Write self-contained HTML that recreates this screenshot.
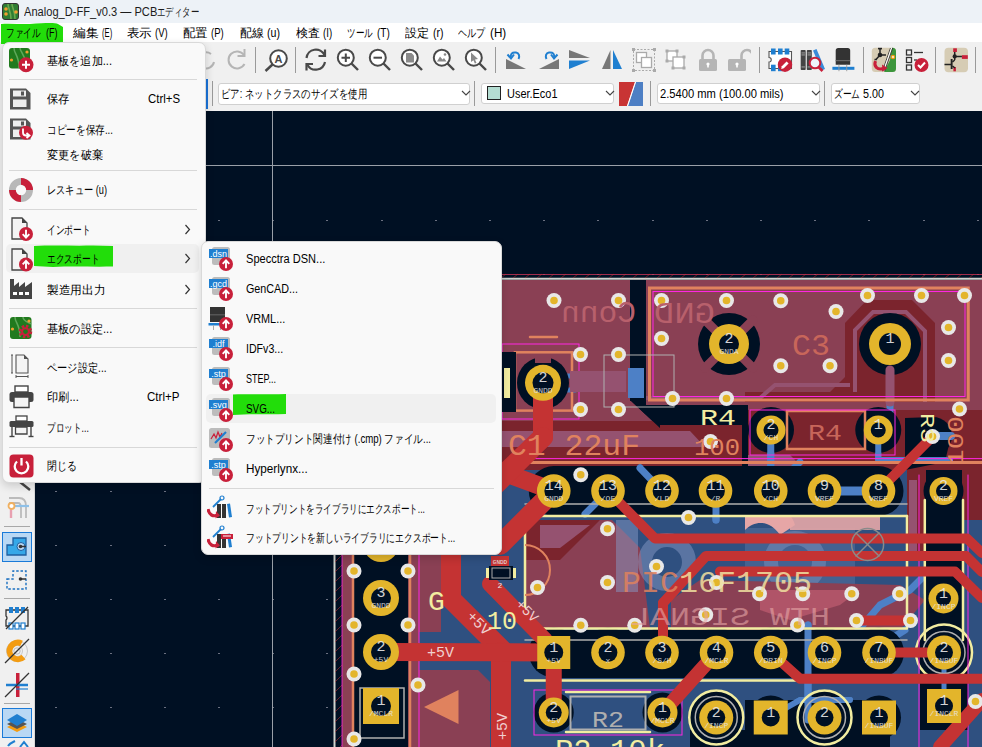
<!DOCTYPE html>
<html><head><meta charset="utf-8">
<style>
*{box-sizing:border-box;margin:0;padding:0}
html,body{width:982px;height:747px;overflow:hidden;background:#001023;font-family:"Liberation Sans",sans-serif;font-size:12px;color:#1a1a1a;position:relative}
.abs{position:absolute}
#title{left:0;top:0;width:982px;height:23px;background:#edf2f7}
#menubar{left:0;top:23px;width:982px;height:19px;background:#fff}
#tb1{left:0;top:42px;width:982px;height:36px;background:#f0f0f0}
#tb2{left:0;top:78px;width:982px;height:33px;background:#f0f0f0}
#lefttb{left:0;top:111px;width:35px;height:636px;background:#f0f0f0;border-right:1px solid #d8d8d8}
.t{position:absolute;white-space:nowrap;line-height:1}
.menu{position:absolute;background:#f9f9f9;border:1px solid #d9d9d9;border-radius:7px;box-shadow:0 3px 8px rgba(0,0,0,0.16)}
.sep{position:absolute;height:1px;background:#d8d8d8}
.dd{position:absolute;background:#fff;border:1px solid #d0d0d0;border-radius:3px}
.vsep{position:absolute;width:1px;background:#9a9a9a}
</style></head><body>
<svg class="abs" style="left:0;top:0" width="982" height="747" font-family="Liberation Sans, sans-serif"><rect x="55" y="165" width="2" height="1" fill="#6a7080" /><rect x="55" y="220" width="2" height="1" fill="#6a7080" /><rect x="55" y="274" width="2" height="1" fill="#6a7080" /><rect x="55" y="328" width="2" height="1" fill="#6a7080" /><rect x="55" y="382" width="2" height="1" fill="#6a7080" /><rect x="55" y="436" width="2" height="1" fill="#6a7080" /><rect x="55" y="491" width="2" height="1" fill="#6a7080" /><rect x="55" y="545" width="2" height="1" fill="#6a7080" /><rect x="55" y="599" width="2" height="1" fill="#6a7080" /><rect x="55" y="653" width="2" height="1" fill="#6a7080" /><rect x="55" y="707" width="2" height="1" fill="#6a7080" /><rect x="55" y="762" width="2" height="1" fill="#6a7080" /><rect x="110" y="165" width="2" height="1" fill="#6a7080" /><rect x="110" y="220" width="2" height="1" fill="#6a7080" /><rect x="110" y="274" width="2" height="1" fill="#6a7080" /><rect x="110" y="328" width="2" height="1" fill="#6a7080" /><rect x="110" y="382" width="2" height="1" fill="#6a7080" /><rect x="110" y="436" width="2" height="1" fill="#6a7080" /><rect x="110" y="491" width="2" height="1" fill="#6a7080" /><rect x="110" y="545" width="2" height="1" fill="#6a7080" /><rect x="110" y="599" width="2" height="1" fill="#6a7080" /><rect x="110" y="653" width="2" height="1" fill="#6a7080" /><rect x="110" y="707" width="2" height="1" fill="#6a7080" /><rect x="110" y="762" width="2" height="1" fill="#6a7080" /><rect x="164" y="165" width="2" height="1" fill="#6a7080" /><rect x="164" y="220" width="2" height="1" fill="#6a7080" /><rect x="164" y="274" width="2" height="1" fill="#6a7080" /><rect x="164" y="328" width="2" height="1" fill="#6a7080" /><rect x="164" y="382" width="2" height="1" fill="#6a7080" /><rect x="164" y="436" width="2" height="1" fill="#6a7080" /><rect x="164" y="491" width="2" height="1" fill="#6a7080" /><rect x="164" y="545" width="2" height="1" fill="#6a7080" /><rect x="164" y="599" width="2" height="1" fill="#6a7080" /><rect x="164" y="653" width="2" height="1" fill="#6a7080" /><rect x="164" y="707" width="2" height="1" fill="#6a7080" /><rect x="164" y="762" width="2" height="1" fill="#6a7080" /><rect x="218" y="165" width="2" height="1" fill="#6a7080" /><rect x="218" y="220" width="2" height="1" fill="#6a7080" /><rect x="218" y="274" width="2" height="1" fill="#6a7080" /><rect x="218" y="328" width="2" height="1" fill="#6a7080" /><rect x="218" y="382" width="2" height="1" fill="#6a7080" /><rect x="218" y="436" width="2" height="1" fill="#6a7080" /><rect x="218" y="491" width="2" height="1" fill="#6a7080" /><rect x="218" y="545" width="2" height="1" fill="#6a7080" /><rect x="218" y="599" width="2" height="1" fill="#6a7080" /><rect x="218" y="653" width="2" height="1" fill="#6a7080" /><rect x="218" y="707" width="2" height="1" fill="#6a7080" /><rect x="218" y="762" width="2" height="1" fill="#6a7080" /><rect x="272" y="165" width="2" height="1" fill="#6a7080" /><rect x="272" y="220" width="2" height="1" fill="#6a7080" /><rect x="272" y="274" width="2" height="1" fill="#6a7080" /><rect x="272" y="328" width="2" height="1" fill="#6a7080" /><rect x="272" y="382" width="2" height="1" fill="#6a7080" /><rect x="272" y="436" width="2" height="1" fill="#6a7080" /><rect x="272" y="491" width="2" height="1" fill="#6a7080" /><rect x="272" y="545" width="2" height="1" fill="#6a7080" /><rect x="272" y="599" width="2" height="1" fill="#6a7080" /><rect x="272" y="653" width="2" height="1" fill="#6a7080" /><rect x="272" y="707" width="2" height="1" fill="#6a7080" /><rect x="272" y="762" width="2" height="1" fill="#6a7080" /><rect x="326" y="165" width="2" height="1" fill="#6a7080" /><rect x="326" y="220" width="2" height="1" fill="#6a7080" /><rect x="326" y="274" width="2" height="1" fill="#6a7080" /><rect x="326" y="328" width="2" height="1" fill="#6a7080" /><rect x="326" y="382" width="2" height="1" fill="#6a7080" /><rect x="326" y="436" width="2" height="1" fill="#6a7080" /><rect x="326" y="491" width="2" height="1" fill="#6a7080" /><rect x="326" y="545" width="2" height="1" fill="#6a7080" /><rect x="326" y="599" width="2" height="1" fill="#6a7080" /><rect x="326" y="653" width="2" height="1" fill="#6a7080" /><rect x="326" y="707" width="2" height="1" fill="#6a7080" /><rect x="326" y="762" width="2" height="1" fill="#6a7080" /><rect x="381" y="165" width="2" height="1" fill="#6a7080" /><rect x="381" y="220" width="2" height="1" fill="#6a7080" /><rect x="381" y="274" width="2" height="1" fill="#6a7080" /><rect x="381" y="328" width="2" height="1" fill="#6a7080" /><rect x="381" y="382" width="2" height="1" fill="#6a7080" /><rect x="381" y="436" width="2" height="1" fill="#6a7080" /><rect x="381" y="491" width="2" height="1" fill="#6a7080" /><rect x="381" y="545" width="2" height="1" fill="#6a7080" /><rect x="381" y="599" width="2" height="1" fill="#6a7080" /><rect x="381" y="653" width="2" height="1" fill="#6a7080" /><rect x="381" y="707" width="2" height="1" fill="#6a7080" /><rect x="381" y="762" width="2" height="1" fill="#6a7080" /><rect x="435" y="165" width="2" height="1" fill="#6a7080" /><rect x="435" y="220" width="2" height="1" fill="#6a7080" /><rect x="435" y="274" width="2" height="1" fill="#6a7080" /><rect x="435" y="328" width="2" height="1" fill="#6a7080" /><rect x="435" y="382" width="2" height="1" fill="#6a7080" /><rect x="435" y="436" width="2" height="1" fill="#6a7080" /><rect x="435" y="491" width="2" height="1" fill="#6a7080" /><rect x="435" y="545" width="2" height="1" fill="#6a7080" /><rect x="435" y="599" width="2" height="1" fill="#6a7080" /><rect x="435" y="653" width="2" height="1" fill="#6a7080" /><rect x="435" y="707" width="2" height="1" fill="#6a7080" /><rect x="435" y="762" width="2" height="1" fill="#6a7080" /><rect x="489" y="165" width="2" height="1" fill="#6a7080" /><rect x="489" y="220" width="2" height="1" fill="#6a7080" /><rect x="489" y="274" width="2" height="1" fill="#6a7080" /><rect x="489" y="328" width="2" height="1" fill="#6a7080" /><rect x="489" y="382" width="2" height="1" fill="#6a7080" /><rect x="489" y="436" width="2" height="1" fill="#6a7080" /><rect x="489" y="491" width="2" height="1" fill="#6a7080" /><rect x="489" y="545" width="2" height="1" fill="#6a7080" /><rect x="489" y="599" width="2" height="1" fill="#6a7080" /><rect x="489" y="653" width="2" height="1" fill="#6a7080" /><rect x="489" y="707" width="2" height="1" fill="#6a7080" /><rect x="489" y="762" width="2" height="1" fill="#6a7080" /><rect x="543" y="165" width="2" height="1" fill="#6a7080" /><rect x="543" y="220" width="2" height="1" fill="#6a7080" /><rect x="543" y="274" width="2" height="1" fill="#6a7080" /><rect x="543" y="328" width="2" height="1" fill="#6a7080" /><rect x="543" y="382" width="2" height="1" fill="#6a7080" /><rect x="543" y="436" width="2" height="1" fill="#6a7080" /><rect x="543" y="491" width="2" height="1" fill="#6a7080" /><rect x="543" y="545" width="2" height="1" fill="#6a7080" /><rect x="543" y="599" width="2" height="1" fill="#6a7080" /><rect x="543" y="653" width="2" height="1" fill="#6a7080" /><rect x="543" y="707" width="2" height="1" fill="#6a7080" /><rect x="543" y="762" width="2" height="1" fill="#6a7080" /><rect x="597" y="165" width="2" height="1" fill="#6a7080" /><rect x="597" y="220" width="2" height="1" fill="#6a7080" /><rect x="597" y="274" width="2" height="1" fill="#6a7080" /><rect x="597" y="328" width="2" height="1" fill="#6a7080" /><rect x="597" y="382" width="2" height="1" fill="#6a7080" /><rect x="597" y="436" width="2" height="1" fill="#6a7080" /><rect x="597" y="491" width="2" height="1" fill="#6a7080" /><rect x="597" y="545" width="2" height="1" fill="#6a7080" /><rect x="597" y="599" width="2" height="1" fill="#6a7080" /><rect x="597" y="653" width="2" height="1" fill="#6a7080" /><rect x="597" y="707" width="2" height="1" fill="#6a7080" /><rect x="597" y="762" width="2" height="1" fill="#6a7080" /><rect x="652" y="165" width="2" height="1" fill="#6a7080" /><rect x="652" y="220" width="2" height="1" fill="#6a7080" /><rect x="652" y="274" width="2" height="1" fill="#6a7080" /><rect x="652" y="328" width="2" height="1" fill="#6a7080" /><rect x="652" y="382" width="2" height="1" fill="#6a7080" /><rect x="652" y="436" width="2" height="1" fill="#6a7080" /><rect x="652" y="491" width="2" height="1" fill="#6a7080" /><rect x="652" y="545" width="2" height="1" fill="#6a7080" /><rect x="652" y="599" width="2" height="1" fill="#6a7080" /><rect x="652" y="653" width="2" height="1" fill="#6a7080" /><rect x="652" y="707" width="2" height="1" fill="#6a7080" /><rect x="652" y="762" width="2" height="1" fill="#6a7080" /><rect x="706" y="165" width="2" height="1" fill="#6a7080" /><rect x="706" y="220" width="2" height="1" fill="#6a7080" /><rect x="706" y="274" width="2" height="1" fill="#6a7080" /><rect x="706" y="328" width="2" height="1" fill="#6a7080" /><rect x="706" y="382" width="2" height="1" fill="#6a7080" /><rect x="706" y="436" width="2" height="1" fill="#6a7080" /><rect x="706" y="491" width="2" height="1" fill="#6a7080" /><rect x="706" y="545" width="2" height="1" fill="#6a7080" /><rect x="706" y="599" width="2" height="1" fill="#6a7080" /><rect x="706" y="653" width="2" height="1" fill="#6a7080" /><rect x="706" y="707" width="2" height="1" fill="#6a7080" /><rect x="706" y="762" width="2" height="1" fill="#6a7080" /><rect x="760" y="165" width="2" height="1" fill="#6a7080" /><rect x="760" y="220" width="2" height="1" fill="#6a7080" /><rect x="760" y="274" width="2" height="1" fill="#6a7080" /><rect x="760" y="328" width="2" height="1" fill="#6a7080" /><rect x="760" y="382" width="2" height="1" fill="#6a7080" /><rect x="760" y="436" width="2" height="1" fill="#6a7080" /><rect x="760" y="491" width="2" height="1" fill="#6a7080" /><rect x="760" y="545" width="2" height="1" fill="#6a7080" /><rect x="760" y="599" width="2" height="1" fill="#6a7080" /><rect x="760" y="653" width="2" height="1" fill="#6a7080" /><rect x="760" y="707" width="2" height="1" fill="#6a7080" /><rect x="760" y="762" width="2" height="1" fill="#6a7080" /><rect x="814" y="165" width="2" height="1" fill="#6a7080" /><rect x="814" y="220" width="2" height="1" fill="#6a7080" /><rect x="814" y="274" width="2" height="1" fill="#6a7080" /><rect x="814" y="328" width="2" height="1" fill="#6a7080" /><rect x="814" y="382" width="2" height="1" fill="#6a7080" /><rect x="814" y="436" width="2" height="1" fill="#6a7080" /><rect x="814" y="491" width="2" height="1" fill="#6a7080" /><rect x="814" y="545" width="2" height="1" fill="#6a7080" /><rect x="814" y="599" width="2" height="1" fill="#6a7080" /><rect x="814" y="653" width="2" height="1" fill="#6a7080" /><rect x="814" y="707" width="2" height="1" fill="#6a7080" /><rect x="814" y="762" width="2" height="1" fill="#6a7080" /><rect x="868" y="165" width="2" height="1" fill="#6a7080" /><rect x="868" y="220" width="2" height="1" fill="#6a7080" /><rect x="868" y="274" width="2" height="1" fill="#6a7080" /><rect x="868" y="328" width="2" height="1" fill="#6a7080" /><rect x="868" y="382" width="2" height="1" fill="#6a7080" /><rect x="868" y="436" width="2" height="1" fill="#6a7080" /><rect x="868" y="491" width="2" height="1" fill="#6a7080" /><rect x="868" y="545" width="2" height="1" fill="#6a7080" /><rect x="868" y="599" width="2" height="1" fill="#6a7080" /><rect x="868" y="653" width="2" height="1" fill="#6a7080" /><rect x="868" y="707" width="2" height="1" fill="#6a7080" /><rect x="868" y="762" width="2" height="1" fill="#6a7080" /><rect x="923" y="165" width="2" height="1" fill="#6a7080" /><rect x="923" y="220" width="2" height="1" fill="#6a7080" /><rect x="923" y="274" width="2" height="1" fill="#6a7080" /><rect x="923" y="328" width="2" height="1" fill="#6a7080" /><rect x="923" y="382" width="2" height="1" fill="#6a7080" /><rect x="923" y="436" width="2" height="1" fill="#6a7080" /><rect x="923" y="491" width="2" height="1" fill="#6a7080" /><rect x="923" y="545" width="2" height="1" fill="#6a7080" /><rect x="923" y="599" width="2" height="1" fill="#6a7080" /><rect x="923" y="653" width="2" height="1" fill="#6a7080" /><rect x="923" y="707" width="2" height="1" fill="#6a7080" /><rect x="923" y="762" width="2" height="1" fill="#6a7080" /><rect x="977" y="165" width="2" height="1" fill="#6a7080" /><rect x="977" y="220" width="2" height="1" fill="#6a7080" /><rect x="977" y="274" width="2" height="1" fill="#6a7080" /><rect x="977" y="328" width="2" height="1" fill="#6a7080" /><rect x="977" y="382" width="2" height="1" fill="#6a7080" /><rect x="977" y="436" width="2" height="1" fill="#6a7080" /><rect x="977" y="491" width="2" height="1" fill="#6a7080" /><rect x="977" y="545" width="2" height="1" fill="#6a7080" /><rect x="977" y="599" width="2" height="1" fill="#6a7080" /><rect x="977" y="653" width="2" height="1" fill="#6a7080" /><rect x="977" y="707" width="2" height="1" fill="#6a7080" /><rect x="977" y="762" width="2" height="1" fill="#6a7080" /><line x1="272.5" y1="111" x2="272.5" y2="747" stroke="#9aa0a8" stroke-width="1"/><line x1="35" y1="165.5" x2="982" y2="165.5" stroke="#9aa0a8" stroke-width="1"/><polygon points="342,280 630,280 630,400 660,428 342,428" fill="#8a4054" /><polygon points="646,280 982,280 982,410 646,410" fill="#8a4054" /><polygon points="867,300 912,300 935,323 935,402 745,402 745,392 830,392 845,377 845,323" fill="#7b242d" /><polyline points="855,392 855,330 873,312 906,312 925,331 925,402" fill="none" stroke="#955270" stroke-width="4"/><polyline points="646,398 760,398 775,385 850,385" fill="none" stroke="#955270" stroke-width="4"/><polygon points="342,421 742,421 742,462 342,462" fill="#7b242d" /><polygon points="502,431 690,431 705,447 502,447" fill="#955270" /><polygon points="502,462 742,462 742,470 502,470" fill="#7b242d" /><polygon points="748,410 982,410 982,470 748,470" fill="#7b242d" /><polygon points="748,455 790,455 805,470 748,470" fill="#955270" /><polygon points="342,470 982,470 982,747 342,747" fill="#2f5080" /><polygon points="525,520 612,520 640,548 650,628 525,628" fill="#8a4054" /><polygon points="525,520 600,520 560,560 525,560" fill="#7b242d" /><polygon points="540,525 590,525 560,548 540,548" fill="#955270" /><rect x="616" y="520" width="22" height="72" fill="#8597c4" opacity="0.5"/><circle cx="667" cy="562" r="22" fill="none" stroke="#8597c4" stroke-width="14" opacity="0.5"/><circle cx="795" cy="562" r="24" fill="none" stroke="#8597c4" stroke-width="14" opacity="0.45"/><rect x="745" y="528" width="110" height="62" fill="#8597c4" opacity="0.25"/><path d="M790 505 H880 V530 H790 Z" fill="#e6a6a6" opacity="0.9"/><path d="M745 510 C760 500 790 505 795 525 L780 535 C770 520 755 520 745 530 Z" fill="#e6a6a6" /><polygon points="671,600 700,580 900,585 925,600 900,630 671,630" fill="#8a4054" /><polygon points="760,590 860,590 840,605 790,620 760,610" fill="#b05468" /><polygon points="342,555 419,555 419,747 342,747" fill="#8a4054" /><polygon points="419,670 478,670 490,682 490,747 419,747" fill="#8a4054" /><polygon points="419,555 441,555 441,632 419,632" fill="#8a4054" /><polygon points="924,470 982,470 982,520 924,520" fill="#7b242d" /><rect x="907" y="470" width="17" height="90" fill="#7b242d" /><rect x="909" y="480" width="8" height="80" fill="#955270" /><polyline points="770.75,430 770.75,491" fill="none" stroke="#4d80c6" stroke-width="7" stroke-linecap="round" stroke-linejoin="round" /><polyline points="890,344 890,420 878,430" fill="none" stroke="#4d80c6" stroke-width="7" stroke-linecap="round" stroke-linejoin="round" /><polyline points="824.5,491 878.5,491" fill="none" stroke="#4d80c6" stroke-width="9" stroke-linecap="round" stroke-linejoin="round" /><polyline points="555,376 575,376" fill="none" stroke="#4d80c6" stroke-width="5" stroke-linecap="round" stroke-linejoin="round" /><polyline points="555,390 575,390" fill="none" stroke="#4d80c6" stroke-width="5" stroke-linecap="round" stroke-linejoin="round" /><polyline points="878.25,430 878.25,460 950,460" fill="none" stroke="#4d80c6" stroke-width="6" stroke-linecap="round" stroke-linejoin="round" /><polyline points="608,491 585,514" fill="none" stroke="#4d80c6" stroke-width="7" stroke-linecap="round" stroke-linejoin="round" /><polyline points="662,491 640,468" fill="none" stroke="#4d80c6" stroke-width="7" stroke-linecap="round" stroke-linejoin="round" /><polyline points="716,491 716,520" fill="none" stroke="#4d80c6" stroke-width="7" stroke-linecap="round" stroke-linejoin="round" /><polyline points="771,491 800,462" fill="none" stroke="#4d80c6" stroke-width="7" stroke-linecap="round" stroke-linejoin="round" /><polyline points="850,640 880,605 910,590 925,575" fill="none" stroke="#4d80c6" stroke-width="7" stroke-linecap="round" stroke-linejoin="round" /><polyline points="808,625 808,720" fill="none" stroke="#4d80c6" stroke-width="7" stroke-linecap="round" stroke-linejoin="round" /><polyline points="870,652 905,630" fill="none" stroke="#4d80c6" stroke-width="7" stroke-linecap="round" stroke-linejoin="round" /><polyline points="770,717 800,700 850,700" fill="none" stroke="#4d80c6" stroke-width="6" stroke-linecap="round" stroke-linejoin="round" /><polyline points="944,652 944,706" fill="none" stroke="#4d80c6" stroke-width="5" stroke-linecap="round" stroke-linejoin="round" /><rect x="630" y="279" width="16" height="122" fill="#001023" /><polygon points="630,400 646,400 646,405 742,405 742,425 660,425 660,428" fill="#001023" /><rect x="742" y="405" width="6" height="75" fill="#001023" /><circle cx="543" cy="383" r="26" fill="#001023" /><rect x="535" y="355" width="16" height="8" fill="#8a4054" /><rect x="535" y="403" width="16" height="8" fill="#8a4054" /><circle cx="729" cy="344" r="31" fill="#001023" /><polyline points="738.899,353.899 753.042,368.042" fill="none" stroke="#8a4054" stroke-width="9" stroke-linecap="round" stroke-linejoin="round" stroke-linecap="butt"/><polyline points="719.101,353.899 704.958,368.042" fill="none" stroke="#8a4054" stroke-width="9" stroke-linecap="round" stroke-linejoin="round" stroke-linecap="butt"/><polyline points="719.101,334.101 704.958,319.958" fill="none" stroke="#8a4054" stroke-width="9" stroke-linecap="round" stroke-linejoin="round" stroke-linecap="butt"/><polyline points="738.899,334.101 753.042,319.958" fill="none" stroke="#8a4054" stroke-width="9" stroke-linecap="round" stroke-linejoin="round" stroke-linecap="butt"/><circle cx="890" cy="344" r="31" fill="#001023" /><polyline points="890,370 890,402" fill="none" stroke="#955270" stroke-width="9" stroke-linecap="round" stroke-linejoin="round" stroke-linecap="butt"/><circle cx="771" cy="430" r="23" fill="#001023" /><circle cx="878.25" cy="430" r="23" fill="#001023" /><polyline points="770.75,430 770.75,491" fill="none" stroke="#4d80c6" stroke-width="7" stroke-linecap="round" stroke-linejoin="round" /><circle cx="553.75" cy="491" r="25" fill="#001023" /><circle cx="608" cy="491" r="25" fill="#001023" /><circle cx="662" cy="491" r="25" fill="#001023" /><circle cx="715.5" cy="491" r="25" fill="#001023" /><circle cx="770.75" cy="491" r="25" fill="#001023" /><circle cx="824.5" cy="491" r="25" fill="#001023" /><circle cx="878.5" cy="491" r="25" fill="#001023" /><rect x="553" y="466" width="326" height="50" fill="#001023" /><circle cx="943.5" cy="491" r="20" fill="#001023" /><rect x="926" y="470" width="36" height="50" fill="#001023" /><polyline points="824.5,491 878.5,491" fill="none" stroke="#4d80c6" stroke-width="9" stroke-linecap="round" stroke-linejoin="round" /><polyline points="608,491 585,514" fill="none" stroke="#4d80c6" stroke-width="7" stroke-linecap="round" stroke-linejoin="round" /><polyline points="662,491 640,468" fill="none" stroke="#4d80c6" stroke-width="7" stroke-linecap="round" stroke-linejoin="round" /><polyline points="716,491 716,520" fill="none" stroke="#4d80c6" stroke-width="7" stroke-linecap="round" stroke-linejoin="round" /><circle cx="553.75" cy="652.5" r="25" fill="#001023" /><circle cx="608" cy="652.5" r="25" fill="#001023" /><circle cx="662" cy="652.5" r="25" fill="#001023" /><circle cx="716.5" cy="652.5" r="25" fill="#001023" /><circle cx="770.75" cy="652.5" r="25" fill="#001023" /><circle cx="824.5" cy="652.5" r="25" fill="#001023" /><circle cx="879" cy="652.5" r="25" fill="#001023" /><rect x="553" y="630" width="326" height="48" fill="#001023" /><rect x="924" y="510" width="40" height="130" fill="#001023" /><circle cx="943.5" cy="598" r="20" fill="#001023" /><circle cx="944" cy="652.5" r="28" fill="#001023" /><circle cx="944" cy="706" r="24" fill="#001023" /><rect x="920" y="640" width="48" height="90" fill="#001023" /><circle cx="553.75" cy="712.5" r="20" fill="#001023" /><circle cx="662.5" cy="712.5" r="20" fill="#001023" /><circle cx="716.25" cy="717.5" r="28" fill="#001023" /><circle cx="770.75" cy="717.5" r="22" fill="#001023" /><circle cx="824.5" cy="717.5" r="28" fill="#001023" /><circle cx="879" cy="717.5" r="22" fill="#001023" /><rect x="745" y="700" width="140" height="47" fill="#001023" /><rect x="690" y="730" width="200" height="17" fill="#001023" /><circle cx="381" cy="544" r="27" fill="#001023" /><circle cx="381" cy="598" r="27" fill="#001023" /><circle cx="381" cy="652" r="27" fill="#001023" /><circle cx="381" cy="706" r="27" fill="#001023" /><rect x="354" y="520" width="54" height="227" fill="#001023" /><circle cx="933" cy="436" r="19" fill="#001023" /><polygon points="905,418 933,417 950,440 945,462 905,470" fill="#001023" /><polyline points="878.25,430 878.25,460 950,460" fill="none" stroke="#4d80c6" stroke-width="6" stroke-linecap="round" stroke-linejoin="round" /><polyline points="933,436 951,436" fill="none" stroke="#4d80c6" stroke-width="8" stroke-linecap="round" stroke-linejoin="round" /><polyline points="770,717 800,700 850,700" fill="none" stroke="#4d80c6" stroke-width="6" stroke-linecap="round" stroke-linejoin="round" /><polyline points="944,652 944,706" fill="none" stroke="#4d80c6" stroke-width="5" stroke-linecap="round" stroke-linejoin="round" /><polyline points="808,625 808,720" fill="none" stroke="#4d80c6" stroke-width="7" stroke-linecap="round" stroke-linejoin="round" /><line x1="334.5" y1="278" x2="334.5" y2="747" stroke="#d0d2cd" stroke-width="2"/><line x1="334" y1="278.7" x2="982" y2="278.7" stroke="#d0d2cd" stroke-width="2"/><line x1="342" y1="274.5" x2="982" y2="274.5" stroke="#c83458" stroke-width="1" opacity="0.8"/><line x1="345" y1="278" x2="350" y2="274" stroke="#c83434" stroke-width="0.8" opacity="0.6"/><line x1="357" y1="278" x2="362" y2="274" stroke="#c83434" stroke-width="0.8" opacity="0.6"/><line x1="369" y1="278" x2="374" y2="274" stroke="#c83434" stroke-width="0.8" opacity="0.6"/><line x1="381" y1="278" x2="386" y2="274" stroke="#c83434" stroke-width="0.8" opacity="0.6"/><line x1="393" y1="278" x2="398" y2="274" stroke="#c83434" stroke-width="0.8" opacity="0.6"/><line x1="405" y1="278" x2="410" y2="274" stroke="#c83434" stroke-width="0.8" opacity="0.6"/><line x1="417" y1="278" x2="422" y2="274" stroke="#c83434" stroke-width="0.8" opacity="0.6"/><line x1="429" y1="278" x2="434" y2="274" stroke="#c83434" stroke-width="0.8" opacity="0.6"/><line x1="441" y1="278" x2="446" y2="274" stroke="#c83434" stroke-width="0.8" opacity="0.6"/><line x1="453" y1="278" x2="458" y2="274" stroke="#c83434" stroke-width="0.8" opacity="0.6"/><line x1="465" y1="278" x2="470" y2="274" stroke="#c83434" stroke-width="0.8" opacity="0.6"/><line x1="477" y1="278" x2="482" y2="274" stroke="#c83434" stroke-width="0.8" opacity="0.6"/><line x1="489" y1="278" x2="494" y2="274" stroke="#c83434" stroke-width="0.8" opacity="0.6"/><line x1="501" y1="278" x2="506" y2="274" stroke="#c83434" stroke-width="0.8" opacity="0.6"/><line x1="513" y1="278" x2="518" y2="274" stroke="#c83434" stroke-width="0.8" opacity="0.6"/><line x1="525" y1="278" x2="530" y2="274" stroke="#c83434" stroke-width="0.8" opacity="0.6"/><line x1="537" y1="278" x2="542" y2="274" stroke="#c83434" stroke-width="0.8" opacity="0.6"/><line x1="549" y1="278" x2="554" y2="274" stroke="#c83434" stroke-width="0.8" opacity="0.6"/><line x1="561" y1="278" x2="566" y2="274" stroke="#c83434" stroke-width="0.8" opacity="0.6"/><line x1="573" y1="278" x2="578" y2="274" stroke="#c83434" stroke-width="0.8" opacity="0.6"/><line x1="585" y1="278" x2="590" y2="274" stroke="#c83434" stroke-width="0.8" opacity="0.6"/><line x1="597" y1="278" x2="602" y2="274" stroke="#c83434" stroke-width="0.8" opacity="0.6"/><line x1="609" y1="278" x2="614" y2="274" stroke="#c83434" stroke-width="0.8" opacity="0.6"/><line x1="621" y1="278" x2="626" y2="274" stroke="#c83434" stroke-width="0.8" opacity="0.6"/><line x1="633" y1="278" x2="638" y2="274" stroke="#c83434" stroke-width="0.8" opacity="0.6"/><line x1="645" y1="278" x2="650" y2="274" stroke="#c83434" stroke-width="0.8" opacity="0.6"/><line x1="657" y1="278" x2="662" y2="274" stroke="#c83434" stroke-width="0.8" opacity="0.6"/><line x1="669" y1="278" x2="674" y2="274" stroke="#c83434" stroke-width="0.8" opacity="0.6"/><line x1="681" y1="278" x2="686" y2="274" stroke="#c83434" stroke-width="0.8" opacity="0.6"/><line x1="693" y1="278" x2="698" y2="274" stroke="#c83434" stroke-width="0.8" opacity="0.6"/><line x1="705" y1="278" x2="710" y2="274" stroke="#c83434" stroke-width="0.8" opacity="0.6"/><line x1="717" y1="278" x2="722" y2="274" stroke="#c83434" stroke-width="0.8" opacity="0.6"/><line x1="729" y1="278" x2="734" y2="274" stroke="#c83434" stroke-width="0.8" opacity="0.6"/><line x1="741" y1="278" x2="746" y2="274" stroke="#c83434" stroke-width="0.8" opacity="0.6"/><line x1="753" y1="278" x2="758" y2="274" stroke="#c83434" stroke-width="0.8" opacity="0.6"/><line x1="765" y1="278" x2="770" y2="274" stroke="#c83434" stroke-width="0.8" opacity="0.6"/><line x1="777" y1="278" x2="782" y2="274" stroke="#c83434" stroke-width="0.8" opacity="0.6"/><line x1="789" y1="278" x2="794" y2="274" stroke="#c83434" stroke-width="0.8" opacity="0.6"/><line x1="801" y1="278" x2="806" y2="274" stroke="#c83434" stroke-width="0.8" opacity="0.6"/><line x1="813" y1="278" x2="818" y2="274" stroke="#c83434" stroke-width="0.8" opacity="0.6"/><line x1="825" y1="278" x2="830" y2="274" stroke="#c83434" stroke-width="0.8" opacity="0.6"/><line x1="837" y1="278" x2="842" y2="274" stroke="#c83434" stroke-width="0.8" opacity="0.6"/><line x1="849" y1="278" x2="854" y2="274" stroke="#c83434" stroke-width="0.8" opacity="0.6"/><line x1="861" y1="278" x2="866" y2="274" stroke="#c83434" stroke-width="0.8" opacity="0.6"/><line x1="873" y1="278" x2="878" y2="274" stroke="#c83434" stroke-width="0.8" opacity="0.6"/><line x1="885" y1="278" x2="890" y2="274" stroke="#c83434" stroke-width="0.8" opacity="0.6"/><line x1="897" y1="278" x2="902" y2="274" stroke="#c83434" stroke-width="0.8" opacity="0.6"/><line x1="909" y1="278" x2="914" y2="274" stroke="#c83434" stroke-width="0.8" opacity="0.6"/><line x1="921" y1="278" x2="926" y2="274" stroke="#c83434" stroke-width="0.8" opacity="0.6"/><line x1="933" y1="278" x2="938" y2="274" stroke="#c83434" stroke-width="0.8" opacity="0.6"/><line x1="945" y1="278" x2="950" y2="274" stroke="#c83434" stroke-width="0.8" opacity="0.6"/><line x1="957" y1="278" x2="962" y2="274" stroke="#c83434" stroke-width="0.8" opacity="0.6"/><line x1="969" y1="278" x2="974" y2="274" stroke="#c83434" stroke-width="0.8" opacity="0.6"/><line x1="981" y1="278" x2="986" y2="274" stroke="#c83434" stroke-width="0.8" opacity="0.6"/><line x1="335" y1="292" x2="342" y2="285" stroke="#c83434" stroke-width="0.8" opacity="0.7"/><line x1="335" y1="302" x2="342" y2="295" stroke="#c83434" stroke-width="0.8" opacity="0.7"/><line x1="335" y1="312" x2="342" y2="305" stroke="#c83434" stroke-width="0.8" opacity="0.7"/><line x1="335" y1="322" x2="342" y2="315" stroke="#c83434" stroke-width="0.8" opacity="0.7"/><line x1="335" y1="332" x2="342" y2="325" stroke="#c83434" stroke-width="0.8" opacity="0.7"/><line x1="335" y1="342" x2="342" y2="335" stroke="#c83434" stroke-width="0.8" opacity="0.7"/><line x1="335" y1="352" x2="342" y2="345" stroke="#c83434" stroke-width="0.8" opacity="0.7"/><line x1="335" y1="362" x2="342" y2="355" stroke="#c83434" stroke-width="0.8" opacity="0.7"/><line x1="335" y1="372" x2="342" y2="365" stroke="#c83434" stroke-width="0.8" opacity="0.7"/><line x1="335" y1="382" x2="342" y2="375" stroke="#c83434" stroke-width="0.8" opacity="0.7"/><line x1="335" y1="392" x2="342" y2="385" stroke="#c83434" stroke-width="0.8" opacity="0.7"/><line x1="335" y1="402" x2="342" y2="395" stroke="#c83434" stroke-width="0.8" opacity="0.7"/><line x1="335" y1="412" x2="342" y2="405" stroke="#c83434" stroke-width="0.8" opacity="0.7"/><line x1="335" y1="422" x2="342" y2="415" stroke="#c83434" stroke-width="0.8" opacity="0.7"/><line x1="335" y1="432" x2="342" y2="425" stroke="#c83434" stroke-width="0.8" opacity="0.7"/><line x1="335" y1="442" x2="342" y2="435" stroke="#c83434" stroke-width="0.8" opacity="0.7"/><line x1="335" y1="452" x2="342" y2="445" stroke="#c83434" stroke-width="0.8" opacity="0.7"/><line x1="335" y1="462" x2="342" y2="455" stroke="#c83434" stroke-width="0.8" opacity="0.7"/><line x1="335" y1="472" x2="342" y2="465" stroke="#c83434" stroke-width="0.8" opacity="0.7"/><line x1="335" y1="482" x2="342" y2="475" stroke="#c83434" stroke-width="0.8" opacity="0.7"/><line x1="335" y1="492" x2="342" y2="485" stroke="#c83434" stroke-width="0.8" opacity="0.7"/><line x1="335" y1="502" x2="342" y2="495" stroke="#c83434" stroke-width="0.8" opacity="0.7"/><line x1="335" y1="512" x2="342" y2="505" stroke="#c83434" stroke-width="0.8" opacity="0.7"/><line x1="335" y1="522" x2="342" y2="515" stroke="#c83434" stroke-width="0.8" opacity="0.7"/><line x1="335" y1="532" x2="342" y2="525" stroke="#c83434" stroke-width="0.8" opacity="0.7"/><line x1="335" y1="542" x2="342" y2="535" stroke="#c83434" stroke-width="0.8" opacity="0.7"/><line x1="335" y1="552" x2="342" y2="545" stroke="#c83434" stroke-width="0.8" opacity="0.7"/><line x1="335" y1="562" x2="342" y2="555" stroke="#c83434" stroke-width="0.8" opacity="0.7"/><line x1="335" y1="572" x2="342" y2="565" stroke="#c83434" stroke-width="0.8" opacity="0.7"/><line x1="335" y1="582" x2="342" y2="575" stroke="#c83434" stroke-width="0.8" opacity="0.7"/><line x1="335" y1="592" x2="342" y2="585" stroke="#c83434" stroke-width="0.8" opacity="0.7"/><line x1="335" y1="602" x2="342" y2="595" stroke="#c83434" stroke-width="0.8" opacity="0.7"/><line x1="335" y1="612" x2="342" y2="605" stroke="#c83434" stroke-width="0.8" opacity="0.7"/><line x1="335" y1="622" x2="342" y2="615" stroke="#c83434" stroke-width="0.8" opacity="0.7"/><line x1="335" y1="632" x2="342" y2="625" stroke="#c83434" stroke-width="0.8" opacity="0.7"/><line x1="335" y1="642" x2="342" y2="635" stroke="#c83434" stroke-width="0.8" opacity="0.7"/><line x1="335" y1="652" x2="342" y2="645" stroke="#c83434" stroke-width="0.8" opacity="0.7"/><line x1="335" y1="662" x2="342" y2="655" stroke="#c83434" stroke-width="0.8" opacity="0.7"/><line x1="335" y1="672" x2="342" y2="665" stroke="#c83434" stroke-width="0.8" opacity="0.7"/><line x1="335" y1="682" x2="342" y2="675" stroke="#c83434" stroke-width="0.8" opacity="0.7"/><line x1="335" y1="692" x2="342" y2="685" stroke="#c83434" stroke-width="0.8" opacity="0.7"/><line x1="335" y1="702" x2="342" y2="695" stroke="#c83434" stroke-width="0.8" opacity="0.7"/><line x1="335" y1="712" x2="342" y2="705" stroke="#c83434" stroke-width="0.8" opacity="0.7"/><line x1="335" y1="722" x2="342" y2="715" stroke="#c83434" stroke-width="0.8" opacity="0.7"/><line x1="335" y1="732" x2="342" y2="725" stroke="#c83434" stroke-width="0.8" opacity="0.7"/><line x1="335" y1="742" x2="342" y2="735" stroke="#c83434" stroke-width="0.8" opacity="0.7"/><line x1="335" y1="752" x2="342" y2="745" stroke="#c83434" stroke-width="0.8" opacity="0.7"/><line x1="342" y1="279" x2="342" y2="747" stroke="#ff26e2" stroke-width="1" opacity="0.8"/><rect x="649.5" y="288" width="318.75" height="112" fill="none" stroke="#e0825e" stroke-width="3"/><rect x="653" y="291.5" width="312" height="105" fill="none" stroke="#ff26e2" stroke-width="1"/><rect x="515" y="352.3" width="57" height="58.3" fill="none" stroke="#e0825e" stroke-width="2.5"/><rect x="502" y="344" width="77" height="75" fill="none" stroke="#ff26e2" stroke-width="1"/><polyline points="530,337 557,337" fill="none" stroke="#e0825e" stroke-width="2.5" stroke-linecap="round" stroke-linejoin="round" stroke-linecap="butt" /><rect x="502" y="352" width="14" height="60" fill="#001023" /><rect x="504" y="368" width="6" height="30" fill="#f2eda1" /><rect x="570" y="371" width="56" height="21" fill="#955270" /><rect x="604" y="355" width="70" height="52" rx="0" fill="none" stroke="#afafaf" stroke-width="1"/><rect x="628" y="368" width="16" height="30" fill="#4d80c6"/><polyline points="525,462.6 982,462.6" fill="none" stroke="#e0825e" stroke-width="3" stroke-linecap="round" stroke-linejoin="round" stroke-linecap="butt" /><polyline points="525,458.6 982,458.6" fill="none" stroke="#ff26e2" stroke-width="1" stroke-linecap="round" stroke-linejoin="round" stroke-linecap="butt" /><polyline points="525,504 907,504" fill="none" stroke="#afafaf" stroke-width="1.5" stroke-linecap="round" stroke-linejoin="round" stroke-linecap="butt" /><polyline points="525,516 907,516" fill="none" stroke="#f2eda1" stroke-width="2.5" stroke-linecap="round" stroke-linejoin="round" stroke-linecap="butt" /><polyline points="525,516 525,628.5 907,628.5 907,516" fill="none" stroke="#f2eda1" stroke-width="2.5" stroke-linecap="round" stroke-linejoin="round" stroke-linecap="butt" /><polyline points="525,640 907,640" fill="none" stroke="#afafaf" stroke-width="1.5" stroke-linecap="round" stroke-linejoin="round" stroke-linecap="butt" /><polyline points="525,680.5 907,680.5" fill="none" stroke="#f2eda1" stroke-width="2.5" stroke-linecap="round" stroke-linejoin="round" stroke-linecap="butt" /><path d="M525 545 A25 25 0 0 1 525 595" fill="none" stroke="#e0825e" stroke-width="2"/><rect x="787" y="411" width="78" height="38" fill="none" stroke="#e0825e" stroke-width="2.5"/><rect x="750" y="410" width="145" height="45" fill="none" stroke="#ff26e2" stroke-width="1"/><rect x="570.5" y="696.5" width="75" height="33" fill="none" stroke="#afafaf" stroke-width="2"/><polyline points="566,692 650,692" fill="none" stroke="#f2eda1" stroke-width="2.5" stroke-linecap="round" stroke-linejoin="round" stroke-linecap="butt" /><polyline points="566,732 650,732" fill="none" stroke="#f2eda1" stroke-width="2.5" stroke-linecap="round" stroke-linejoin="round" stroke-linecap="butt" /><rect x="534" y="690" width="148" height="45" fill="none" stroke="#ff26e2" stroke-width="1"/><circle cx="716.25" cy="717.5" r="27" fill="none" stroke="#f2eda1" stroke-width="2.5"/><circle cx="716.25" cy="717.5" r="21" fill="none" stroke="#afafaf" stroke-width="1.5"/><circle cx="824.5" cy="717.5" r="27" fill="none" stroke="#f2eda1" stroke-width="2.5"/><circle cx="824.5" cy="717.5" r="21" fill="none" stroke="#afafaf" stroke-width="1.5"/><circle cx="944" cy="652.5" r="28" fill="none" stroke="#f2eda1" stroke-width="2.5"/><circle cx="944" cy="652.5" r="21" fill="none" stroke="#afafaf" stroke-width="1.5"/><polyline points="924.8,500 924.8,640" fill="none" stroke="#f2eda1" stroke-width="2.5" stroke-linecap="round" stroke-linejoin="round" stroke-linecap="butt" /><polyline points="963,500 963,640" fill="none" stroke="#f2eda1" stroke-width="2.5" stroke-linecap="round" stroke-linejoin="round" stroke-linecap="butt" /><polyline points="919,475 919,747" fill="none" stroke="#ff26e2" stroke-width="1" stroke-linecap="round" stroke-linejoin="round" stroke-linecap="butt" /><polyline points="968,475 968,747" fill="none" stroke="#ff26e2" stroke-width="1" stroke-linecap="round" stroke-linejoin="round" stroke-linecap="butt" /><polyline points="353,520 353,747" fill="none" stroke="#e0825e" stroke-width="2.5" stroke-linecap="round" stroke-linejoin="round" stroke-linecap="butt" /><polyline points="410,520 410,747" fill="none" stroke="#e0825e" stroke-width="2.5" stroke-linecap="round" stroke-linejoin="round" stroke-linecap="butt" /><polyline points="419,555 419,747" fill="none" stroke="#ff26e2" stroke-width="1" stroke-linecap="round" stroke-linejoin="round" stroke-linecap="butt" /><rect x="360" y="688" width="44" height="50" fill="none" stroke="#afafaf" stroke-width="1.5"/><polygon points="458.5,690 458.5,724 424,707" fill="#e0825e" /><polyline points="543,395 543,437 500,478" fill="none" stroke="#c43333" stroke-width="20" stroke-linecap="round" stroke-linejoin="round" stroke-linecap="butt"/><polyline points="502,472 553.75,491" fill="none" stroke="#c43333" stroke-width="18" stroke-linecap="round" stroke-linejoin="round" stroke-linecap="butt"/><polyline points="553.75,491 500,545" fill="none" stroke="#c43333" stroke-width="20" stroke-linecap="round" stroke-linejoin="round" stroke-linecap="butt"/><polyline points="543,437 451,529 451,599 505,653" fill="none" stroke="#c43333" stroke-width="20" stroke-linecap="round" stroke-linejoin="round" stroke-linecap="butt"/><polyline points="501,652 501,747" fill="none" stroke="#c43333" stroke-width="20" stroke-linecap="round" stroke-linejoin="round" stroke-linecap="butt"/><polyline points="490,584 545,640" fill="none" stroke="#c43333" stroke-width="16" stroke-linecap="round" stroke-linejoin="round" stroke-linecap="butt"/><polyline points="381,652 553.75,652.5" fill="none" stroke="#c43333" stroke-width="18" stroke-linecap="round" stroke-linejoin="round" stroke-linecap="butt"/><polyline points="553.75,652.5 553.75,712.5" fill="none" stroke="#c43333" stroke-width="16" stroke-linecap="round" stroke-linejoin="round" stroke-linecap="butt"/><polyline points="716.5,652.5 662.5,712.5" fill="none" stroke="#c43333" stroke-width="14" stroke-linecap="round" stroke-linejoin="round" stroke-linecap="butt"/><polyline points="663,603 663,652.5" fill="none" stroke="#c43333" stroke-width="10" stroke-linecap="round" stroke-linejoin="round" stroke-linecap="butt"/><polyline points="663,603 706,556 966,556 982,572" fill="none" stroke="#c43333" stroke-width="10" stroke-linecap="round" stroke-linejoin="round" stroke-linecap="butt"/><polyline points="608,491 655,538.5 967,538.5 982,553" fill="none" stroke="#c43333" stroke-width="10" stroke-linecap="round" stroke-linejoin="round" stroke-linecap="butt"/><polyline points="720,571.5 955,571.5 982,598" fill="none" stroke="#c43333" stroke-width="10" stroke-linecap="round" stroke-linejoin="round" stroke-linecap="butt"/><polyline points="878.5,491 932.5,436.5" fill="none" stroke="#c43333" stroke-width="10" stroke-linecap="round" stroke-linejoin="round" stroke-linecap="butt"/><polyline points="856.5,620.5 910.5,620.5" fill="none" stroke="#c43333" stroke-width="10" stroke-linecap="round" stroke-linejoin="round" stroke-linecap="butt"/><polyline points="879,652.5 944,652.5" fill="none" stroke="#c43333" stroke-width="10" stroke-linecap="round" stroke-linejoin="round" stroke-linecap="butt"/><polyline points="770.75,652.5 800,678.75 982,678.75" fill="none" stroke="#c43333" stroke-width="10" stroke-linecap="round" stroke-linejoin="round" stroke-linecap="butt"/><polyline points="982,700 940,747" fill="none" stroke="#c43333" stroke-width="14" stroke-linecap="round" stroke-linejoin="round" stroke-linecap="butt"/><circle cx="867.6" cy="544.4" r="16" fill="none" stroke="#8a8a8a" stroke-width="1.5"/><polyline points="856,533 879,556" fill="none" stroke="#8a8a8a" stroke-width="1.5" stroke-linecap="round" stroke-linejoin="round" stroke-linecap="butt" /><polyline points="879,533 856,556" fill="none" stroke="#8a8a8a" stroke-width="1.5" stroke-linecap="round" stroke-linejoin="round" stroke-linecap="butt" /><circle cx="553.75" cy="491" r="16.8" fill="#e3b52b" /><circle cx="553.75" cy="491" r="9.4" fill="#001023" /><circle cx="608" cy="491" r="16.8" fill="#e3b52b" /><circle cx="608" cy="491" r="9.4" fill="#001023" /><circle cx="662" cy="491" r="16.8" fill="#e3b52b" /><circle cx="662" cy="491" r="9.4" fill="#001023" /><circle cx="715.5" cy="491" r="16.8" fill="#e3b52b" /><circle cx="715.5" cy="491" r="9.4" fill="#001023" /><circle cx="770.75" cy="491" r="16.8" fill="#e3b52b" /><circle cx="770.75" cy="491" r="9.4" fill="#001023" /><circle cx="824.5" cy="491" r="16.8" fill="#e3b52b" /><circle cx="824.5" cy="491" r="9.4" fill="#001023" /><circle cx="878.5" cy="491" r="16.8" fill="#e3b52b" /><circle cx="878.5" cy="491" r="9.4" fill="#001023" /><circle cx="943.5" cy="491" r="14" fill="#e3b52b" /><circle cx="943.5" cy="491" r="7.5" fill="#001023" /><rect x="537.25" y="636" width="33" height="33" fill="#e3b52b" /><circle cx="553.75" cy="652.5" r="9.5" fill="#001023" /><circle cx="608" cy="652.5" r="16.8" fill="#e3b52b" /><circle cx="608" cy="652.5" r="9.4" fill="#001023" /><circle cx="662" cy="652.5" r="16.8" fill="#e3b52b" /><circle cx="662" cy="652.5" r="9.4" fill="#001023" /><circle cx="716.5" cy="652.5" r="16.8" fill="#e3b52b" /><circle cx="716.5" cy="652.5" r="9.4" fill="#001023" /><circle cx="770.75" cy="652.5" r="16.8" fill="#e3b52b" /><circle cx="770.75" cy="652.5" r="9.4" fill="#001023" /><circle cx="824.5" cy="652.5" r="16.8" fill="#e3b52b" /><circle cx="824.5" cy="652.5" r="9.4" fill="#001023" /><circle cx="879" cy="652.5" r="16.8" fill="#e3b52b" /><circle cx="879" cy="652.5" r="9.4" fill="#001023" /><circle cx="943.5" cy="598.5" r="15" fill="#e3b52b" /><circle cx="943.5" cy="598.5" r="7.5" fill="#001023" /><circle cx="944" cy="652.5" r="17" fill="#e3b52b" /><circle cx="944" cy="652.5" r="9" fill="#001023" /><rect x="927" y="689" width="34" height="34" fill="#e3b52b" /><circle cx="944" cy="706" r="9" fill="#001023" /><circle cx="543" cy="382.8" r="18" fill="#e3b52b" /><circle cx="543" cy="382.8" r="10.5" fill="#001023" /><circle cx="729" cy="344" r="20" fill="#e3b52b" /><circle cx="729" cy="344" r="10" fill="#001023" /><circle cx="890" cy="344" r="21" fill="#e3b52b" /><circle cx="890" cy="344" r="11" fill="#001023" /><circle cx="771" cy="430" r="14.5" fill="#e3b52b" /><circle cx="771" cy="430" r="7.5" fill="#001023" /><circle cx="878.25" cy="430" r="14.5" fill="#e3b52b" /><circle cx="878.25" cy="430" r="7.5" fill="#001023" /><circle cx="381" cy="544" r="18" fill="#e3b52b" /><circle cx="381" cy="544" r="10" fill="#001023" /><circle cx="381" cy="598" r="18" fill="#e3b52b" /><circle cx="381" cy="598" r="10" fill="#001023" /><circle cx="381" cy="652" r="18" fill="#e3b52b" /><circle cx="381" cy="652" r="10" fill="#001023" /><rect x="363" y="688" width="36" height="36" fill="#e3b52b" /><circle cx="381" cy="706" r="10" fill="#001023" /><circle cx="553.75" cy="712.5" r="15" fill="#e3b52b" /><circle cx="553.75" cy="712.5" r="8" fill="#001023" /><circle cx="662.5" cy="712.5" r="15" fill="#e3b52b" /><circle cx="662.5" cy="712.5" r="8" fill="#001023" /><circle cx="716.25" cy="717.5" r="17" fill="#e3b52b" /><circle cx="716.25" cy="717.5" r="9" fill="#001023" /><circle cx="824.5" cy="717.5" r="17" fill="#e3b52b" /><circle cx="824.5" cy="717.5" r="9" fill="#001023" /><rect x="753.75" y="700.5" width="34" height="34" fill="#e3b52b" /><circle cx="770.75" cy="717.5" r="9" fill="#001023" /><rect x="862" y="700.5" width="34" height="34" fill="#e3b52b" /><circle cx="879" cy="717.5" r="9" fill="#001023" /><circle cx="554" cy="300.5" r="7.5" fill="#e8e8e8" /><circle cx="554" cy="300.5" r="3.8" fill="#e3b52b" /><circle cx="618.5" cy="300.5" r="7.5" fill="#e8e8e8" /><circle cx="618.5" cy="300.5" r="3.8" fill="#e3b52b" /><circle cx="661.5" cy="300.5" r="7.5" fill="#e8e8e8" /><circle cx="661.5" cy="300.5" r="3.8" fill="#e3b52b" /><circle cx="726.5" cy="300.5" r="7.5" fill="#e8e8e8" /><circle cx="726.5" cy="300.5" r="3.8" fill="#e3b52b" /><circle cx="661.5" cy="338.5" r="7.5" fill="#e8e8e8" /><circle cx="661.5" cy="338.5" r="3.8" fill="#e3b52b" /><circle cx="580.5" cy="354.5" r="7.5" fill="#e8e8e8" /><circle cx="580.5" cy="354.5" r="3.8" fill="#e3b52b" /><circle cx="618.5" cy="354.5" r="7.5" fill="#e8e8e8" /><circle cx="618.5" cy="354.5" r="3.8" fill="#e3b52b" /><circle cx="580.5" cy="409.5" r="7.5" fill="#e8e8e8" /><circle cx="580.5" cy="409.5" r="3.8" fill="#e3b52b" /><circle cx="618.5" cy="409.5" r="7.5" fill="#e8e8e8" /><circle cx="618.5" cy="409.5" r="3.8" fill="#e3b52b" /><circle cx="672.5" cy="398.5" r="7.5" fill="#e8e8e8" /><circle cx="672.5" cy="398.5" r="3.8" fill="#e3b52b" /><circle cx="726.5" cy="398.5" r="7.5" fill="#e8e8e8" /><circle cx="726.5" cy="398.5" r="3.8" fill="#e3b52b" /><circle cx="710.5" cy="441.5" r="7.5" fill="#e8e8e8" /><circle cx="710.5" cy="441.5" r="3.8" fill="#e3b52b" /><circle cx="780.75" cy="300.75" r="7.5" fill="#e8e8e8" /><circle cx="780.75" cy="300.75" r="3.8" fill="#e3b52b" /><circle cx="836" cy="311.5" r="7.5" fill="#e8e8e8" /><circle cx="836" cy="311.5" r="3.8" fill="#e3b52b" /><circle cx="867.5" cy="295.5" r="7.5" fill="#e8e8e8" /><circle cx="867.5" cy="295.5" r="3.8" fill="#e3b52b" /><circle cx="921.5" cy="295.5" r="7.5" fill="#e8e8e8" /><circle cx="921.5" cy="295.5" r="3.8" fill="#e3b52b" /><circle cx="964.5" cy="295.5" r="7.5" fill="#e8e8e8" /><circle cx="964.5" cy="295.5" r="3.8" fill="#e3b52b" /><circle cx="948.5" cy="327.5" r="7.5" fill="#e8e8e8" /><circle cx="948.5" cy="327.5" r="3.8" fill="#e3b52b" /><circle cx="780.75" cy="365.75" r="7.5" fill="#e8e8e8" /><circle cx="780.75" cy="365.75" r="3.8" fill="#e3b52b" /><circle cx="830" cy="365.75" r="7.5" fill="#e8e8e8" /><circle cx="830" cy="365.75" r="3.8" fill="#e3b52b" /><circle cx="948.5" cy="360.5" r="7.5" fill="#e8e8e8" /><circle cx="948.5" cy="360.5" r="3.8" fill="#e3b52b" /><circle cx="959.5" cy="409" r="7.5" fill="#e8e8e8" /><circle cx="959.5" cy="409" r="3.8" fill="#e3b52b" /><circle cx="932.5" cy="436.5" r="7.5" fill="#e8e8e8" /><circle cx="932.5" cy="436.5" r="3.8" fill="#e3b52b" /><circle cx="580.75" cy="474.75" r="7.5" fill="#e8e8e8" /><circle cx="580.75" cy="474.75" r="3.8" fill="#e3b52b" /><circle cx="607.5" cy="528.75" r="7.5" fill="#e8e8e8" /><circle cx="607.5" cy="528.75" r="3.8" fill="#e3b52b" /><circle cx="688.5" cy="517.5" r="7.5" fill="#e8e8e8" /><circle cx="688.5" cy="517.5" r="3.8" fill="#e3b52b" /><circle cx="656.5" cy="566.5" r="7.5" fill="#e8e8e8" /><circle cx="656.5" cy="566.5" r="3.8" fill="#e3b52b" /><circle cx="537.5" cy="587.5" r="7.5" fill="#e8e8e8" /><circle cx="537.5" cy="587.5" r="3.8" fill="#e3b52b" /><circle cx="607.5" cy="582.5" r="7.5" fill="#e8e8e8" /><circle cx="607.5" cy="582.5" r="3.8" fill="#e3b52b" /><circle cx="716.5" cy="582.5" r="7.5" fill="#e8e8e8" /><circle cx="716.5" cy="582.5" r="3.8" fill="#e3b52b" /><circle cx="580.75" cy="625.25" r="7.5" fill="#e8e8e8" /><circle cx="580.75" cy="625.25" r="3.8" fill="#e3b52b" /><circle cx="634.75" cy="625.25" r="7.5" fill="#e8e8e8" /><circle cx="634.75" cy="625.25" r="3.8" fill="#e3b52b" /><circle cx="705.75" cy="614.75" r="7.5" fill="#e8e8e8" /><circle cx="705.75" cy="614.75" r="3.8" fill="#e3b52b" /><circle cx="759.5" cy="593.75" r="7.5" fill="#e8e8e8" /><circle cx="759.5" cy="593.75" r="3.8" fill="#e3b52b" /><circle cx="802.75" cy="593.75" r="7.5" fill="#e8e8e8" /><circle cx="802.75" cy="593.75" r="3.8" fill="#e3b52b" /><circle cx="851.75" cy="593.75" r="7.5" fill="#e8e8e8" /><circle cx="851.75" cy="593.75" r="3.8" fill="#e3b52b" /><circle cx="899.5" cy="593.75" r="7.5" fill="#e8e8e8" /><circle cx="899.5" cy="593.75" r="3.8" fill="#e3b52b" /><circle cx="797.5" cy="625" r="7.5" fill="#e8e8e8" /><circle cx="797.5" cy="625" r="3.8" fill="#e3b52b" /><circle cx="856.5" cy="620.5" r="7.5" fill="#e8e8e8" /><circle cx="856.5" cy="620.5" r="3.8" fill="#e3b52b" /><circle cx="910.5" cy="620.5" r="7.5" fill="#e8e8e8" /><circle cx="910.5" cy="620.5" r="3.8" fill="#e3b52b" /><circle cx="975.5" cy="701.5" r="7.5" fill="#e8e8e8" /><circle cx="975.5" cy="701.5" r="3.8" fill="#e3b52b" /><circle cx="354" cy="571" r="7.5" fill="#e8e8e8" /><circle cx="354" cy="571" r="3.8" fill="#e3b52b" /><circle cx="408" cy="571" r="7.5" fill="#e8e8e8" /><circle cx="408" cy="571" r="3.8" fill="#e3b52b" /><circle cx="354" cy="625" r="7.5" fill="#e8e8e8" /><circle cx="354" cy="625" r="3.8" fill="#e3b52b" /><circle cx="408" cy="625" r="7.5" fill="#e8e8e8" /><circle cx="408" cy="625" r="3.8" fill="#e3b52b" /><circle cx="354" cy="674" r="7.5" fill="#e8e8e8" /><circle cx="354" cy="674" r="3.8" fill="#e3b52b" /><circle cx="418" cy="685" r="7.5" fill="#e8e8e8" /><circle cx="418" cy="685" r="3.8" fill="#e3b52b" /><circle cx="354" cy="739" r="7.5" fill="#e8e8e8" /><circle cx="354" cy="739" r="3.8" fill="#e3b52b" /><text x="792" y="355" font-size="30" fill="#c8665a" font-family="Liberation Mono, monospace" textLength="38" lengthAdjust="spacingAndGlyphs">C3</text><text x="508" y="455" font-size="30" fill="#e0825e" font-family="Liberation Mono, monospace" textLength="132" lengthAdjust="spacingAndGlyphs">C1 22uF</text><text x="700" y="425" font-size="22" fill="#f2eda1" font-family="Liberation Mono, monospace" textLength="36" lengthAdjust="spacingAndGlyphs">R4</text><text x="694" y="455" font-size="24" fill="#e0825e" font-family="Liberation Mono, monospace" textLength="46" lengthAdjust="spacingAndGlyphs">100</text><text x="808" y="440" font-size="22" fill="#c8665a" font-family="Liberation Mono, monospace" textLength="34" lengthAdjust="spacingAndGlyphs">R4</text><text x="622" y="592" font-size="30" fill="#e0825e" font-family="Liberation Mono, monospace" textLength="190" lengthAdjust="spacingAndGlyphs" opacity="0.85">PIC<tspan fill="#f0e0a0">16F1705</tspan></text><text x="0" y="0" font-size="26" fill="#e6a6a6" font-family="Liberation Mono, monospace" textLength="200" lengthAdjust="spacingAndGlyphs" opacity="0.6" transform="translate(830,625) scale(-1,1)">HTW  SIGNAL</text><text x="592" y="727" font-size="22" fill="#afafaf" font-family="Liberation Mono, monospace" textLength="32" lengthAdjust="spacingAndGlyphs">R2</text><text x="555" y="760" font-size="30" fill="#f2eda1" font-family="Liberation Mono, monospace" textLength="110" lengthAdjust="spacingAndGlyphs">R2 10k</text><text x="428" y="610" font-size="28" fill="#f2eda1" font-family="Liberation Mono, monospace" >G</text><text x="487" y="629" font-size="26" fill="#f2eda1" font-family="Liberation Mono, monospace" textLength="30" lengthAdjust="spacingAndGlyphs">10</text><rect x="491" y="556" width="18" height="10" fill="#c43333" /><rect x="489" y="566" width="24" height="14" fill="#001023" /><rect x="492" y="568" width="18" height="10" fill="none" stroke="#aaa" stroke-width="1"/><rect x="486" y="568" width="3" height="10" fill="#f2eda1" /><rect x="513" y="568" width="3" height="10" fill="#f2eda1" /><text x="500" y="564" font-size="6" fill="#e8e8e8" font-family="Liberation Mono, monospace" text-anchor="middle">GNDD</text><text x="500" y="588" font-size="8" fill="#e8e8e8" font-family="Liberation Mono, monospace" text-anchor="middle">2</text><text x="0" y="0" font-size="22" fill="#e0825e" font-family="Liberation Mono, monospace" textLength="50" lengthAdjust="spacingAndGlyphs" transform="translate(963,466) rotate(-90)">100</text><text x="0" y="0" font-size="20" fill="#f2eda1" font-family="Liberation Mono, monospace" textLength="30" lengthAdjust="spacingAndGlyphs" transform="translate(921,413) rotate(90)">R3</text><g transform="translate(1270,0) scale(-1,1)"><text x="634" y="322" font-size="30" fill="#b8606c" font-family="Liberation Mono" textLength="75" lengthAdjust="spacingAndGlyphs">Conn</text><text x="555" y="323" font-size="30" fill="#b8606c" font-family="Liberation Mono" textLength="61" lengthAdjust="spacingAndGlyphs">GND</text></g><text x="553.75" y="490" font-size="15" fill="#e8e8e8" font-family="Liberation Mono, monospace" text-anchor="middle" opacity="0.9">14</text><text x="553.75" y="501" font-size="8" fill="#e8e8e8" font-family="Liberation Mono, monospace" text-anchor="middle" opacity="0.85">GNDD</text><text x="608" y="490" font-size="15" fill="#e8e8e8" font-family="Liberation Mono, monospace" text-anchor="middle" opacity="0.9">13</text><text x="608" y="501" font-size="8" fill="#e8e8e8" font-family="Liberation Mono, monospace" text-anchor="middle" opacity="0.85">/OE</text><text x="662" y="490" font-size="15" fill="#e8e8e8" font-family="Liberation Mono, monospace" text-anchor="middle" opacity="0.9">12</text><text x="662" y="501" font-size="8" fill="#e8e8e8" font-family="Liberation Mono, monospace" text-anchor="middle" opacity="0.85">/LD</text><text x="715.5" y="490" font-size="15" fill="#e8e8e8" font-family="Liberation Mono, monospace" text-anchor="middle" opacity="0.9">11</text><text x="715.5" y="501" font-size="8" fill="#e8e8e8" font-family="Liberation Mono, monospace" text-anchor="middle" opacity="0.85">/R</text><text x="770.75" y="490" font-size="15" fill="#e8e8e8" font-family="Liberation Mono, monospace" text-anchor="middle" opacity="0.9">10</text><text x="770.75" y="501" font-size="8" fill="#e8e8e8" font-family="Liberation Mono, monospace" text-anchor="middle" opacity="0.85">/CH</text><text x="824.5" y="490" font-size="15" fill="#e8e8e8" font-family="Liberation Mono, monospace" text-anchor="middle" opacity="0.9">9</text><text x="824.5" y="501" font-size="8" fill="#e8e8e8" font-family="Liberation Mono, monospace" text-anchor="middle" opacity="0.85">VREF</text><text x="878.5" y="490" font-size="15" fill="#e8e8e8" font-family="Liberation Mono, monospace" text-anchor="middle" opacity="0.9">8</text><text x="878.5" y="501" font-size="8" fill="#e8e8e8" font-family="Liberation Mono, monospace" text-anchor="middle" opacity="0.85">VREF</text><text x="553.75" y="651.5" font-size="15" fill="#e8e8e8" font-family="Liberation Mono, monospace" text-anchor="middle" opacity="0.9">1</text><text x="553.75" y="662.5" font-size="8" fill="#e8e8e8" font-family="Liberation Mono, monospace" text-anchor="middle" opacity="0.85">+5V</text><text x="608" y="651.5" font-size="15" fill="#e8e8e8" font-family="Liberation Mono, monospace" text-anchor="middle" opacity="0.9">2</text><text x="608" y="662.5" font-size="8" fill="#e8e8e8" font-family="Liberation Mono, monospace" text-anchor="middle" opacity="0.85">x</text><text x="662" y="651.5" font-size="15" fill="#e8e8e8" font-family="Liberation Mono, monospace" text-anchor="middle" opacity="0.9">3</text><text x="662" y="662.5" font-size="8" fill="#e8e8e8" font-family="Liberation Mono, monospace" text-anchor="middle" opacity="0.85">/S/H</text><text x="716.5" y="651.5" font-size="15" fill="#e8e8e8" font-family="Liberation Mono, monospace" text-anchor="middle" opacity="0.9">4</text><text x="716.5" y="662.5" font-size="8" fill="#e8e8e8" font-family="Liberation Mono, monospace" text-anchor="middle" opacity="0.85">/MCLR</text><text x="770.75" y="651.5" font-size="15" fill="#e8e8e8" font-family="Liberation Mono, monospace" text-anchor="middle" opacity="0.9">5</text><text x="770.75" y="662.5" font-size="8" fill="#e8e8e8" font-family="Liberation Mono, monospace" text-anchor="middle" opacity="0.85">/DRIN</text><text x="824.5" y="651.5" font-size="15" fill="#e8e8e8" font-family="Liberation Mono, monospace" text-anchor="middle" opacity="0.9">6</text><text x="824.5" y="662.5" font-size="8" fill="#e8e8e8" font-family="Liberation Mono, monospace" text-anchor="middle" opacity="0.85">/INCP</text><text x="879" y="651.5" font-size="15" fill="#e8e8e8" font-family="Liberation Mono, monospace" text-anchor="middle" opacity="0.9">7</text><text x="879" y="662.5" font-size="8" fill="#e8e8e8" font-family="Liberation Mono, monospace" text-anchor="middle" opacity="0.85">/INBUF</text><text x="543" y="382" font-size="15" fill="#e8e8e8" font-family="Liberation Mono, monospace" text-anchor="middle" opacity="0.9">2</text><text x="543" y="393" font-size="8" fill="#e8e8e8" font-family="Liberation Mono, monospace" text-anchor="middle" opacity="0.85">GNDD</text><text x="729" y="343" font-size="15" fill="#e8e8e8" font-family="Liberation Mono, monospace" text-anchor="middle" opacity="0.9">2</text><text x="729" y="354" font-size="8" fill="#e8e8e8" font-family="Liberation Mono, monospace" text-anchor="middle" opacity="0.85">GNDA</text><text x="890" y="343" font-size="15" fill="#e8e8e8" font-family="Liberation Mono, monospace" text-anchor="middle" opacity="0.9">1</text><text x="890" y="354" font-size="8" fill="#e8e8e8" font-family="Liberation Mono, monospace" text-anchor="middle" opacity="0.85"></text><text x="381" y="597" font-size="15" fill="#e8e8e8" font-family="Liberation Mono, monospace" text-anchor="middle" opacity="0.9">3</text><text x="381" y="608" font-size="8" fill="#e8e8e8" font-family="Liberation Mono, monospace" text-anchor="middle" opacity="0.85">GNDD</text><text x="381" y="651" font-size="15" fill="#e8e8e8" font-family="Liberation Mono, monospace" text-anchor="middle" opacity="0.9">2</text><text x="381" y="662" font-size="8" fill="#e8e8e8" font-family="Liberation Mono, monospace" text-anchor="middle" opacity="0.85">+5V</text><text x="381" y="705" font-size="15" fill="#e8e8e8" font-family="Liberation Mono, monospace" text-anchor="middle" opacity="0.9">1</text><text x="381" y="716" font-size="8" fill="#e8e8e8" font-family="Liberation Mono, monospace" text-anchor="middle" opacity="0.85">/MCLR</text><text x="553.75" y="711.5" font-size="15" fill="#e8e8e8" font-family="Liberation Mono, monospace" text-anchor="middle" opacity="0.9">2</text><text x="553.75" y="722.5" font-size="8" fill="#e8e8e8" font-family="Liberation Mono, monospace" text-anchor="middle" opacity="0.85">+5V</text><text x="662.5" y="711.5" font-size="15" fill="#e8e8e8" font-family="Liberation Mono, monospace" text-anchor="middle" opacity="0.9">1</text><text x="662.5" y="722.5" font-size="8" fill="#e8e8e8" font-family="Liberation Mono, monospace" text-anchor="middle" opacity="0.85">/MCLR</text><text x="716.25" y="716.5" font-size="15" fill="#e8e8e8" font-family="Liberation Mono, monospace" text-anchor="middle" opacity="0.9">2</text><text x="716.25" y="727.5" font-size="8" fill="#e8e8e8" font-family="Liberation Mono, monospace" text-anchor="middle" opacity="0.85">/INCP</text><text x="824.5" y="716.5" font-size="15" fill="#e8e8e8" font-family="Liberation Mono, monospace" text-anchor="middle" opacity="0.9">2</text><text x="824.5" y="727.5" font-size="8" fill="#e8e8e8" font-family="Liberation Mono, monospace" text-anchor="middle" opacity="0.85"></text><text x="770.75" y="716.5" font-size="15" fill="#e8e8e8" font-family="Liberation Mono, monospace" text-anchor="middle" opacity="0.9">1</text><text x="770.75" y="727.5" font-size="8" fill="#e8e8e8" font-family="Liberation Mono, monospace" text-anchor="middle" opacity="0.85"></text><text x="879" y="716.5" font-size="15" fill="#e8e8e8" font-family="Liberation Mono, monospace" text-anchor="middle" opacity="0.9">1</text><text x="879" y="727.5" font-size="8" fill="#e8e8e8" font-family="Liberation Mono, monospace" text-anchor="middle" opacity="0.85">/INBUF</text><text x="944" y="651.5" font-size="15" fill="#e8e8e8" font-family="Liberation Mono, monospace" text-anchor="middle" opacity="0.9">2</text><text x="944" y="662.5" font-size="8" fill="#e8e8e8" font-family="Liberation Mono, monospace" text-anchor="middle" opacity="0.85">/INBUF</text><text x="944" y="705" font-size="15" fill="#e8e8e8" font-family="Liberation Mono, monospace" text-anchor="middle" opacity="0.9">1</text><text x="944" y="716" font-size="8" fill="#e8e8e8" font-family="Liberation Mono, monospace" text-anchor="middle" opacity="0.85">/INCLR</text><text x="943.5" y="597.5" font-size="15" fill="#e8e8e8" font-family="Liberation Mono, monospace" text-anchor="middle" opacity="0.9">1</text><text x="943.5" y="608.5" font-size="8" fill="#e8e8e8" font-family="Liberation Mono, monospace" text-anchor="middle" opacity="0.85">/INCP</text><text x="943.5" y="490" font-size="15" fill="#e8e8e8" font-family="Liberation Mono, monospace" text-anchor="middle" opacity="0.9">2</text><text x="943.5" y="501" font-size="8" fill="#e8e8e8" font-family="Liberation Mono, monospace" text-anchor="middle" opacity="0.85">VREF</text><text x="771" y="429" font-size="15" fill="#e8e8e8" font-family="Liberation Mono, monospace" text-anchor="middle" opacity="0.9">2</text><text x="771" y="440" font-size="8" fill="#e8e8e8" font-family="Liberation Mono, monospace" text-anchor="middle" opacity="0.85">/CH</text><text x="878.25" y="429" font-size="15" fill="#e8e8e8" font-family="Liberation Mono, monospace" text-anchor="middle" opacity="0.9">1</text><text x="878.25" y="440" font-size="8" fill="#e8e8e8" font-family="Liberation Mono, monospace" text-anchor="middle" opacity="0.85"></text><text x="427" y="657" font-size="15" fill="#f0d0d0" font-family="Liberation Mono, monospace" >+5V</text><text x="0" y="0" font-size="15" fill="#f0d0d0" font-family="Liberation Mono, monospace" transform="translate(466,617) rotate(45)">+5V</text><text x="0" y="0" font-size="15" fill="#f0d0d0" font-family="Liberation Mono, monospace" transform="translate(507,740) rotate(-90)">+5V</text><text x="0" y="0" font-size="14" fill="#f0d0d0" font-family="Liberation Mono, monospace" transform="translate(515,605) rotate(45)">+5V</text></svg><div id="title" class="abs"></div><div id="menubar" class="abs"></div><div id="tb1" class="abs"></div><div id="tb2" class="abs"></div><div id="lefttb" class="abs"></div>
<svg class="abs" style="left:2px;top:3px" width="17" height="17" viewBox="0 0 17 17"><rect x="0.5" y="0.5" width="16" height="16" rx="2.5" fill="#2e7d32" stroke="#333" stroke-width="1"/><path d="M6 1 C6 6 9 8 9 16 M10 1 C10 5 13 7 13 16" stroke="#6aa84f" stroke-width="1.6" fill="none"/><circle cx="4" cy="6" r="1.8" fill="#f0a030"/><circle cx="4" cy="11" r="1.8" fill="#f0a030"/><circle cx="14" cy="9" r="1.8" fill="#f0a030"/></svg>
<div class="t fit" style="left:23.5px;top:6.142px;width:133.3px;font-size:12px;color:#1c1c1c;"><span>Analog_D-FF_v0.3 — PCB</span></div>
<div class="t fit" style="left:157px;top:6.142px;width:42px;font-size:12px;color:#1c1c1c;"><span>エディター</span></div>
<svg class="abs" style="left:0;top:22px" width="70" height="26"><path d="M1 2 C10 1 20 2.5 30 2 C45 1 55 0.5 58 2 L63 5 L63 24 L50 24 C46 23 44 22 40 22 L1 22 Z" fill="#22dd0a"/></svg>
<div class="t fit" style="left:6.4px;top:27.442px;width:34.3px;font-size:12px;color:#000;"><span>ファイル</span></div>
<div class="t fit" style="left:45.8px;top:27.442px;width:11.5px;font-size:12px;color:#000;"><span>(F)</span></div>
<div class="t fit" style="left:72.5px;top:27.442px;width:25.5px;font-size:12px;color:#000;"><span>編集</span></div>
<div class="t fit" style="left:101.8px;top:27.442px;width:10.2px;font-size:12px;color:#000;"><span>(E)</span></div>
<div class="t fit" style="left:127.3px;top:27.442px;width:24.9px;font-size:12px;color:#000;"><span>表示</span></div>
<div class="t fit" style="left:155.3px;top:27.442px;width:12.7px;font-size:12px;color:#000;"><span>(V)</span></div>
<div class="t fit" style="left:183.3px;top:27.442px;width:24.9px;font-size:12px;color:#000;"><span>配置</span></div>
<div class="t fit" style="left:211.3px;top:27.442px;width:12.7px;font-size:12px;color:#000;"><span>(P)</span></div>
<div class="t fit" style="left:239.5px;top:27.442px;width:23.9px;font-size:12px;color:#000;"><span>配線</span></div>
<div class="t fit" style="left:267px;top:27.442px;width:13px;font-size:12px;color:#000;"><span>(u)</span></div>
<div class="t fit" style="left:295.6px;top:27.442px;width:24.2px;font-size:12px;color:#000;"><span>検査</span></div>
<div class="t fit" style="left:322.7px;top:27.442px;width:9.1px;font-size:12px;color:#000;"><span>(I)</span></div>
<div class="t fit" style="left:347px;top:27.442px;width:25.6px;font-size:12px;color:#000;"><span>ツール</span></div>
<div class="t fit" style="left:376.9px;top:27.442px;width:12.8px;font-size:12px;color:#000;"><span>(T)</span></div>
<div class="t fit" style="left:405.4px;top:27.442px;width:24.2px;font-size:12px;color:#000;"><span>設定</span></div>
<div class="t fit" style="left:432.5px;top:27.442px;width:10.5px;font-size:12px;color:#000;"><span>(r)</span></div>
<div class="t fit" style="left:458px;top:27.442px;width:27.2px;font-size:12px;color:#000;"><span>ヘルプ</span></div>
<div class="t fit" style="left:489.5px;top:27.442px;width:16.2px;font-size:12px;color:#000;"><span>(H)</span></div>
<div class="vsep" style="left:255px;top:47px;height:26px"></div>
<div class="vsep" style="left:295px;top:47px;height:26px"></div>
<div class="vsep" style="left:495px;top:47px;height:26px"></div>
<div class="vsep" style="left:759px;top:47px;height:26px"></div>
<div class="vsep" style="left:863px;top:47px;height:26px"></div>
<div class="vsep" style="left:935px;top:47px;height:26px"></div>
<div class="vsep" style="left:975px;top:47px;height:26px"></div>
<svg class="abs" style="left:194px;top:48px" width="24" height="24" viewBox="0 0 24 24"><path d="M17 6 A8 8 0 1 0 20 14" fill="none" stroke="#b5b5b5" stroke-width="2"/></svg>
<svg class="abs" style="left:225px;top:47px" width="24" height="24" viewBox="0 0 24 24"><path d="M19 8 A8.5 8.5 0 1 0 19.5 17" fill="none" stroke="#b5b5b5" stroke-width="2"/><polyline points="19.5,2 19.5,9 12.5,9" fill="none" stroke="#b5b5b5" stroke-width="2"/></svg>
<svg class="abs" style="left:263px;top:47px" width="26" height="26" viewBox="0 0 26 26"><circle cx="15.5" cy="11.5" r="8.3" fill="#fff" stroke="#494949" stroke-width="2"/><line x1="9.5" y1="17.5" x2="2.5" y2="24" stroke="#494949" stroke-width="2.4"/><text x="15.5" y="15.8" font-size="11" font-weight="bold" text-anchor="middle" fill="#494949" font-family="Liberation Sans">A</text></svg>
<svg class="abs" style="left:304px;top:48px" width="24" height="24" viewBox="0 0 24 24"><path d="M2.5 10 A9.5 9.5 0 0 1 20.5 7" fill="none" stroke="#494949" stroke-width="2.2"/><polyline points="21,1.5 21,8 14.5,8" fill="none" stroke="#494949" stroke-width="2.2"/><path d="M21 14 A9.5 9.5 0 0 1 3.5 17" fill="none" stroke="#494949" stroke-width="2.2"/><polyline points="2.5,22.5 2.5,16 9,16" fill="none" stroke="#494949" stroke-width="2.2"/></svg>
<svg class="abs" style="left:336px;top:48px" width="26" height="26" viewBox="0 0 26 26"><circle cx="9.8" cy="9.7" r="8" fill="#fff" stroke="#494949" stroke-width="2"/><line x1="15.5" y1="15.5" x2="22" y2="22" stroke="#494949" stroke-width="2.4"/><path d="M9.8 5.5 V14 M5.5 9.7 H14" stroke="#494949" stroke-width="2"/></svg>
<svg class="abs" style="left:368.1px;top:48px" width="26" height="26" viewBox="0 0 26 26"><circle cx="9.8" cy="9.7" r="8" fill="#fff" stroke="#494949" stroke-width="2"/><line x1="15.5" y1="15.5" x2="22" y2="22" stroke="#494949" stroke-width="2.4"/><path d="M5.5 9.7 H14" stroke="#494949" stroke-width="2"/></svg>
<svg class="abs" style="left:400.2px;top:48px" width="26" height="26" viewBox="0 0 26 26"><circle cx="9.8" cy="9.7" r="8" fill="#fff" stroke="#494949" stroke-width="2"/><line x1="15.5" y1="15.5" x2="22" y2="22" stroke="#494949" stroke-width="2.4"/><path d="M6 5 H11.5 L14 7.5 V14.5 H6 Z" fill="#8a8a8a"/></svg>
<svg class="abs" style="left:431.95px;top:48px" width="26" height="26" viewBox="0 0 26 26"><circle cx="9.8" cy="9.7" r="8" fill="#fff" stroke="#494949" stroke-width="2"/><line x1="15.5" y1="15.5" x2="22" y2="22" stroke="#494949" stroke-width="2.4"/><path d="M5 13.5 L8 8.5 L10.5 11.5 L12 10 L14.5 13.5 Z" fill="#8a8a8a"/><circle cx="13" cy="6.5" r="1.3" fill="#8a8a8a"/></svg>
<svg class="abs" style="left:464px;top:48px" width="26" height="26" viewBox="0 0 26 26"><circle cx="9.8" cy="9.7" r="8" fill="#fff" stroke="#494949" stroke-width="2"/><line x1="15.5" y1="15.5" x2="22" y2="22" stroke="#494949" stroke-width="2.4"/><path d="M7 4.5 L14 11 L11 11.5 L12.5 15 L10.8 15.5 L9.5 12.3 L7 14 Z" fill="#8a8a8a"/></svg>
<svg class="abs" style="left:504px;top:49px" width="24" height="22" viewBox="0 0 24 22"><polygon points="2,10 2,20 22,20" fill="#777"/><path d="M7 9 C6 5 8 3 12 3.5 C15 4 16 7 14.5 10" fill="none" stroke="#1f7fd0" stroke-width="2"/><polyline points="3.5,5.5 7,9.5 10,5.5" fill="none" stroke="#1f7fd0" stroke-width="2"/></svg>
<svg class="abs" style="left:537px;top:49px" width="24" height="22" viewBox="0 0 24 22"><polygon points="22,10 22,20 2,20" fill="#777"/><path d="M17 9 C18 5 16 3 12 3.5 C9 4 8 7 9.5 10" fill="none" stroke="#1f7fd0" stroke-width="2"/><polyline points="20.5,5.5 17,9.5 14,5.5" fill="none" stroke="#1f7fd0" stroke-width="2"/></svg>
<svg class="abs" style="left:568px;top:48px" width="24" height="24" viewBox="0 0 24 24"><polygon points="1,2 22,10 1,10" fill="#777"/><polygon points="1,12.5 22,12.5 1,21" fill="#1f7fd0"/></svg>
<svg class="abs" style="left:600px;top:48px" width="24" height="24" viewBox="0 0 24 24"><polygon points="10.5,2 10.5,21 2,21" fill="#777"/><polygon points="13,2 22,21 13,21" fill="#1f7fd0"/></svg>
<svg class="abs" style="left:632px;top:48px" width="24" height="24" viewBox="0 0 24 24"><rect x="1.5" y="1.5" width="21" height="21" fill="none" stroke="#aaa" stroke-width="1" stroke-dasharray="2,1.5"/><rect x="4.5" y="4.5" width="10" height="10" fill="#fff" stroke="#aaa" stroke-width="1.3"/><rect x="9.5" y="9.5" width="10" height="10" fill="#fff" stroke="#aaa" stroke-width="1.3"/><rect x="0" y="0" width="3" height="3" fill="#aaa"/><rect x="21" y="0" width="3" height="3" fill="#aaa"/><rect x="0" y="21" width="3" height="3" fill="#aaa"/><rect x="21" y="21" width="3" height="3" fill="#aaa"/></svg>
<svg class="abs" style="left:664px;top:48px" width="24" height="24" viewBox="0 0 24 24"><rect x="3" y="3" width="10" height="10" fill="#fff" stroke="#aaa" stroke-width="1.3"/><rect x="9" y="9" width="11" height="11" fill="#fff" stroke="#aaa" stroke-width="1.3"/><rect x="1.5" y="1.5" width="3" height="3" fill="#aaa"/><rect x="11.5" y="1.5" width="3" height="3" fill="#aaa"/><rect x="1.5" y="11.5" width="3" height="3" fill="#aaa"/><rect x="18.5" y="7.5" width="3" height="3" fill="#aaa"/><rect x="7.5" y="18.5" width="3" height="3" fill="#aaa"/><rect x="18.5" y="18.5" width="3" height="3" fill="#aaa"/></svg>
<svg class="abs" style="left:696px;top:48px" width="24" height="24" viewBox="0 0 24 24"><path d="M6.5 11 V7.5 A5.5 5.5 0 0 1 17.5 7.5 V11" fill="none" stroke="#b5b5b5" stroke-width="2.6"/><rect x="3" y="11" width="18" height="12" rx="1.5" fill="#b5b5b5"/><circle cx="12" cy="16" r="1.6" fill="#fff"/><rect x="11.2" y="16" width="1.6" height="3.5" fill="#fff"/></svg>
<svg class="abs" style="left:727px;top:48px" width="24" height="24" viewBox="0 0 24 24"><path d="M14.5 11 V7.5 A5.5 5.5 0 0 1 25.5 7.5 V10" fill="none" stroke="#b5b5b5" stroke-width="2.6"/><rect x="1" y="11" width="18" height="12" rx="1.5" fill="#b5b5b5"/><circle cx="10" cy="16" r="1.6" fill="#fff"/><rect x="9.2" y="16" width="1.6" height="3.5" fill="#fff"/></svg>
<svg class="abs" style="left:767px;top:47px" width="26" height="26" viewBox="0 0 26 26"><path d="M2 4.5 H24.5 V21.5 H2 V15 A2.2 2.2 0 0 0 2 10.5 Z" fill="#fff" stroke="#555" stroke-width="1.1"/><rect x="4" y="1.5" width="4.6" height="6" fill="#1f7fd0"/><rect x="11" y="1.5" width="4.6" height="6" fill="#1f7fd0"/><rect x="17.7" y="1.5" width="4.6" height="6" fill="#1f7fd0"/><rect x="4" y="17.7" width="4.6" height="6.5" fill="#1f7fd0"/><rect x="11" y="17.7" width="4.6" height="6.5" fill="#1f7fd0"/><circle cx="18" cy="17.7" r="7.2" fill="#c8203a"/><path d="M14.2 22 L14.8 19.2 L19.6 14.4 L21.6 16.4 L16.8 21.2 Z" fill="#fff"/></svg>
<svg class="abs" style="left:800px;top:47px" width="26" height="26" viewBox="0 0 26 26"><rect x="0.7" y="3" width="5" height="20" rx="0.8" fill="#444"/><rect x="6.8" y="3" width="5" height="20" rx="0.8" fill="#444"/><rect x="1.5" y="5.5" width="3.4" height="0.9" fill="#aaa"/><rect x="1.5" y="7.5" width="3.4" height="0.9" fill="#aaa"/><rect x="7.6" y="5.5" width="3.4" height="0.9" fill="#aaa"/><rect x="7.6" y="7.5" width="3.4" height="0.9" fill="#aaa"/><rect x="1.5" y="19.5" width="3.4" height="0.9" fill="#aaa"/><rect x="7.6" y="19.5" width="3.4" height="0.9" fill="#aaa"/><path d="M13 3.5 L16.5 2 L25 22 L21.5 23.5 Z" fill="#3a8ad8"/><circle cx="15" cy="16" r="5.3" fill="#eef4fa" stroke="#c8203a" stroke-width="2"/><line x1="18.5" y1="20" x2="22.5" y2="24" stroke="#c8203a" stroke-width="2.6"/></svg>
<svg class="abs" style="left:832px;top:47px" width="26" height="26" viewBox="0 0 26 26"><path d="M3.7 3.5 A2.5 2.5 0 0 1 6.2 1 H15.7 A2.5 2.5 0 0 1 18.2 3.5 V17.7 H3.7 Z" fill="#333"/><rect x="3.7" y="13" width="14.5" height="1.2" fill="#666"/><rect x="0.4" y="19.8" width="22" height="3" fill="#1f7fd0"/><rect x="6.5" y="17.7" width="0.9" height="6.5" fill="#999"/><rect x="14.3" y="17.7" width="0.9" height="6.5" fill="#999"/></svg>
<svg class="abs" style="left:871px;top:47px" width="26" height="26" viewBox="0 0 26 26"><rect x="0.8" y="0.7" width="24.2" height="24.3" rx="3.5" fill="#d6ccb4"/><path d="M21 0.7 H21.5 A3.5 3.5 0 0 1 25 4.2 V21.5 A3.5 3.5 0 0 1 21.5 25 H13 L19 13 Z" fill="#3c963c"/><path d="M19.5 1 L11.5 24" stroke="#333" stroke-width="0.9"/><path d="M20.6 1 L12.6 24" stroke="#fff" stroke-width="1.1"/><path d="M21.7 1 L13.7 24" stroke="#333" stroke-width="0.9"/><circle cx="22" cy="10" r="2.2" fill="#f39c12"/><circle cx="22" cy="10" r="0.9" fill="#fff"/><path d="M9 1 V8 M9 8 H15 M9 8 L5 12.5 M3.5 12.5 H6" stroke="#222" stroke-width="1.5" fill="none"/><rect x="7" y="0.8" width="4" height="1.6" fill="#222"/><circle cx="9" cy="8" r="2.3" fill="#222"/><path d="M4.5 14 C2.5 19 6 23.5 12.5 21.5" fill="none" stroke="#c8203a" stroke-width="3"/><polygon points="11,17.5 16.5,21 11.5,24.8" fill="#c8203a"/></svg>
<svg class="abs" style="left:905px;top:47px" width="26" height="26" viewBox="0 0 26 26"><rect x="1.5" y="3" width="5" height="5" fill="none" stroke="#333" stroke-width="1.3"/><rect x="1.5" y="10.5" width="5" height="5" fill="none" stroke="#333" stroke-width="1.3"/><rect x="1.5" y="18" width="5" height="5" fill="none" stroke="#333" stroke-width="1.3"/><line x1="9" y1="5.5" x2="18" y2="5.5" stroke="#333" stroke-width="1.3"/><line x1="9" y1="13" x2="12" y2="13" stroke="#333" stroke-width="1.3"/><circle cx="16.5" cy="18" r="7" fill="#c8203a"/><polyline points="13,18 15.5,20.5 20,15.5" fill="none" stroke="#fff" stroke-width="2"/></svg>
<svg class="abs" style="left:944px;top:47px" width="26" height="26" viewBox="0 0 26 26"><rect x="0.5" y="0.7" width="23.5" height="24.5" rx="4" fill="#d6ccb4"/><rect x="9.2" y="1.3" width="3.7" height="3.7" fill="#c8203a"/><rect x="17.9" y="8.2" width="5.9" height="3.7" fill="#c8203a"/><rect x="9.4" y="20" width="2.5" height="4.3" fill="#c8203a"/><path d="M10.7 5 V13 M10.7 9.4 H17.9 M0.5 17.5 H7 M8.5 15 L10.7 13 M8.5 19 L11 21" stroke="#222" stroke-width="1.5" fill="none"/><circle cx="10.7" cy="9.4" r="2.1" fill="#222"/><rect x="6.7" y="12" width="1.9" height="10" fill="#222"/></svg>
<svg class="abs" style="left:8px;top:480px" width="24" height="14" viewBox="0 0 24 14"><path d="M12 2 L22 10" stroke="#444" stroke-width="2.5"/></svg>
<svg class="abs" style="left:5px;top:494px" width="26" height="26" viewBox="0 0 26 26"><path d="M4 4 H14 C19 4 21 7 21 12 V24 M4 9 H13 C16 9 16 12 16 14 V24" fill="none" stroke="#bbb" stroke-width="1.8"/><line x1="8" y1="12" x2="24" y2="12" stroke="#8ec0e8" stroke-width="2.2"/><line x1="6" y1="12" x2="6" y2="24" stroke="#e8a0b0" stroke-width="2.4"/><circle cx="6.5" cy="12" r="3" fill="#fff" stroke="#f0b060" stroke-width="1.8"/></svg>
<div class="sep" style="left:4px;top:526px;width:26px;background:#a8a8a8"></div>
<div class="abs" style="left:2px;top:531.5px;width:30px;height:30px;background:#b9d8f4;border:1px solid #1a7ad8"></div>
<svg class="abs" style="left:5px;top:535px" width="24" height="24" viewBox="0 0 24 24"><path d="M2 10 H8 V3 H21 V20 H2 Z" fill="#36a8e8" stroke="#1e5fa0" stroke-width="1.3"/><circle cx="16" cy="11.5" r="4" fill="#b9d8f4" stroke="#1e5fa0" stroke-width="1"/><line x1="15" y1="11.5" x2="21" y2="11.5" stroke="#333" stroke-width="1.5"/><circle cx="15.5" cy="11.5" r="1.8" fill="#333"/></svg>
<svg class="abs" style="left:5px;top:568px" width="24" height="24" viewBox="0 0 24 24"><path d="M2 11 H8 V3 H21 V21 H2 Z" fill="none" stroke="#1a6fc0" stroke-width="1.4" stroke-dasharray="2.5,1.8"/><line x1="15" y1="11" x2="21" y2="11" stroke="#333" stroke-width="1.5"/><circle cx="15.5" cy="11" r="1.8" fill="#333"/></svg>
<div class="sep" style="left:4px;top:598px;width:26px;background:#a8a8a8"></div>
<svg class="abs" style="left:4px;top:605px" width="26" height="26" viewBox="0 0 26 26"><path d="M2 5 H24 V21 H2 V15 A2.5 2.5 0 0 0 2 11 Z" fill="none" stroke="#333" stroke-width="1.3"/><rect x="5" y="2" width="4" height="6" fill="#1f7fd0"/><rect x="11" y="2" width="4" height="6" fill="#1f7fd0"/><rect x="17" y="2" width="4" height="6" fill="#1f7fd0"/><rect x="5" y="18" width="4" height="6" fill="#fff" stroke="#1f7fd0" stroke-width="1.2"/><rect x="11" y="18" width="4" height="6" fill="#fff" stroke="#1f7fd0" stroke-width="1.2"/><rect x="17" y="18" width="4" height="6" fill="#fff" stroke="#1f7fd0" stroke-width="1.2"/><line x1="2" y1="24" x2="24" y2="2" stroke="#333" stroke-width="1.3"/></svg>
<svg class="abs" style="left:4px;top:638px" width="26" height="26" viewBox="0 0 26 26"><circle cx="13" cy="13" r="10.5" fill="none" stroke="#c8c8c8" stroke-width="1"/><circle cx="13" cy="13" r="5.5" fill="none" stroke="#c8c8c8" stroke-width="1"/><path d="M17.5 5.5 A8.3 8.3 0 1 0 19.5 19" fill="none" stroke="#f39c12" stroke-width="6"/><circle cx="13" cy="13" r="3.2" fill="#f0f0f0" stroke="#bbb" stroke-width="1"/><line x1="1" y1="25" x2="25" y2="1" stroke="#333" stroke-width="1.3"/></svg>
<svg class="abs" style="left:4px;top:672px" width="26" height="26" viewBox="0 0 26 26"><rect x="12" y="1" width="3.5" height="24" fill="#c8203a"/><line x1="2" y1="13" x2="24" y2="13" stroke="#1f7fd0" stroke-width="2.5"/><line x1="1" y1="25" x2="25" y2="1" stroke="#333" stroke-width="1.3"/><line x1="12" y1="17" x2="24" y2="17" stroke="#1f7fd0" stroke-width="1.2"/></svg>
<div class="sep" style="left:4px;top:702.5px;width:26px;background:#a8a8a8"></div>
<div class="abs" style="left:2px;top:708px;width:30px;height:30px;background:#b9d8f4;border:1px solid #1a7ad8"></div>
<svg class="abs" style="left:5px;top:711px" width="24" height="24" viewBox="0 0 24 24"><polygon points="12,11 22,16 12,21 2,16" fill="#f39c12"/><polygon points="12,8 22,13 12,18 2,13" fill="#555"/><polygon points="12,3 22,9 12,15 2,9" fill="#1f7fd0"/></svg>
<svg class="abs" style="left:5px;top:740px" width="24" height="8" viewBox="0 0 24 8"><path d="M3 6 C5 3 8 2 10 1 M15 7 L19 2 L23 7" stroke="#1f7fd0" stroke-width="2" fill="none"/></svg>
<div class="abs" style="left:206px;top:79px;width:2px;height:30px;background:#1a73d9"></div>
<div class="vsep" style="left:212px;top:81px;height:25px"></div>
<div class="vsep" style="left:474px;top:81px;height:25px"></div>
<div class="vsep" style="left:650px;top:81px;height:25px"></div>
<div class="vsep" style="left:824px;top:81px;height:25px"></div>
<div class="dd" style="left:218px;top:83px;width:252px;height:22px"></div>
<div class="t fit" style="left:221.2px;top:88.142px;width:146px;font-size:12px;color:#000;"><span>ビア: ネットクラスのサイズを使用</span></div>
<div class="dd" style="left:481px;top:83px;width:133px;height:21px"></div>
<div class="abs" style="left:487px;top:86px;width:14px;height:14px;background:#b4ddd2;border:1px solid #222"></div>
<div class="t fit" style="left:506.5px;top:88.142px;width:50.5px;font-size:12px;color:#000;"><span>User.Eco1</span></div>
<svg class="abs" style="left:619px;top:82px" width="25" height="24"><polygon points="0,0 16,0 8,24 0,24" fill="#c83434"/><polygon points="17,0 24,0 24,24 9,24" fill="#4d7fc4"/><line x1="16.5" y1="0" x2="8.5" y2="24" stroke="#fff" stroke-width="1"/></svg>
<div class="dd" style="left:657px;top:83px;width:163px;height:21px"></div>
<div class="t fit" style="left:659.8px;top:88.142px;width:123.6px;font-size:12px;color:#000;"><span>2.5400 mm (100.00 mils)</span></div>
<div class="dd" style="left:831px;top:83px;width:89px;height:21px"></div>
<div class="t fit" style="left:834px;top:88.142px;width:26.2px;font-size:12px;color:#000;"><span>ズーム</span></div>
<div class="t fit" style="left:863.4px;top:88.142px;width:20.9px;font-size:12px;color:#000;"><span>5.00</span></div>
<svg class="abs" style="left:461px;top:90px" width="10" height="7"><polyline points="1,1 5,5 9,1" fill="none" stroke="#444" stroke-width="1.1"/></svg>
<svg class="abs" style="left:605px;top:90px" width="10" height="7"><polyline points="1,1 5,5 9,1" fill="none" stroke="#444" stroke-width="1.1"/></svg>
<svg class="abs" style="left:811px;top:90px" width="10" height="7"><polyline points="1,1 5,5 9,1" fill="none" stroke="#444" stroke-width="1.1"/></svg>
<svg class="abs" style="left:910px;top:90px" width="10" height="7"><polyline points="1,1 5,5 9,1" fill="none" stroke="#444" stroke-width="1.1"/></svg>
<div class="menu" style="left:2px;top:42px;width:204px;height:441px"></div>
<div class="abs" style="left:6px;top:244px;width:193px;height:29px;background:#f0f0f0;border-radius:5px"></div>
<svg class="abs" style="left:33px;top:244px" width="82" height="24"><path d="M1 2 C20 1 40 2 60 1.5 L80 2 L80 22.5 C60 23 40 22 20 23 L1 22 Z" fill="#22dd0a"/></svg>
<div class="sep" style="left:9px;top:79.4px;width:188px"></div>
<div class="sep" style="left:9px;top:170.2px;width:188px"></div>
<div class="sep" style="left:9px;top:209px;width:188px"></div>
<div class="sep" style="left:9px;top:308.2px;width:188px"></div>
<div class="sep" style="left:9px;top:347.3px;width:188px"></div>
<div class="sep" style="left:9px;top:446.5px;width:188px"></div>
<div class="t fit" style="left:46.6px;top:54.842px;width:65px;font-size:12px;color:#000;"><span>基板を追加...</span></div>
<div class="t fit" style="left:46.6px;top:93.142px;width:22.5px;font-size:12px;color:#000;"><span>保存</span></div>
<div class="t fit" style="left:46.6px;top:124.042px;width:66px;font-size:12px;color:#000;"><span>コピーを保存...</span></div>
<div class="t fit" style="left:46.6px;top:148.542px;width:56px;font-size:12px;color:#000;"><span>変更を破棄</span></div>
<div class="t fit" style="left:46.6px;top:184.242px;width:60px;font-size:12px;color:#000;"><span>レスキュー (u)</span></div>
<div class="t fit" style="left:46.6px;top:223.642px;width:43.6px;font-size:12px;color:#000;"><span>インポート</span></div>
<div class="t fit" style="left:46.6px;top:253.042px;width:52.3px;font-size:12px;color:#000;"><span>エクスポート</span></div>
<div class="t fit" style="left:46.6px;top:284.242px;width:58.6px;font-size:12px;color:#000;"><span>製造用出力</span></div>
<div class="t fit" style="left:46.6px;top:323.342px;width:65.3px;font-size:12px;color:#000;"><span>基板の設定...</span></div>
<div class="t fit" style="left:46.6px;top:361.942px;width:59.6px;font-size:12px;color:#000;"><span>ページ設定...</span></div>
<div class="t fit" style="left:46.6px;top:391.342px;width:31.8px;font-size:12px;color:#000;"><span>印刷...</span></div>
<div class="t fit" style="left:46.6px;top:421.542px;width:41.8px;font-size:12px;color:#000;"><span>プロット...</span></div>
<div class="t fit" style="left:46.6px;top:459.642px;width:29.5px;font-size:12px;color:#000;"><span>閉じる</span></div>
<svg class="abs" style="left:8px;top:47px" width="26" height="26" viewBox="0 0 26 26"><rect x="1" y="1" width="21" height="20.5" rx="3" fill="#217a1e"/><path d="M6 1 C6 7 11 8 11 21 M12 1 C12 5 17 7 17 15" stroke="#5fa85a" stroke-width="1.5" fill="none"/><circle cx="3.5" cy="13" r="1.6" fill="#f0a030"/><circle cx="19" cy="5" r="1.6" fill="#f0a030"/><circle cx="18" cy="17.7" r="7.5" fill="#c8203a"/><path d="M14 17.7 H22 M18 13.7 V21.7" stroke="#fff" stroke-width="2"/></svg>
<svg class="abs" style="left:9px;top:88px" width="24" height="24" viewBox="0 0 24 24"><path d="M1 0.5 H17 L21.5 5 V21.5 H1 Z" fill="#555"/><rect x="4" y="2.5" width="13" height="6" fill="#eee"/><rect x="12" y="3.5" width="3" height="4" fill="#555"/><rect x="4" y="11.5" width="13.5" height="7.5" fill="#eee"/></svg>
<svg class="abs" style="left:9px;top:118px" width="26" height="24" viewBox="0 0 26 24"><path d="M1 0.5 H17 L21.5 5 V21.5 H1 Z" fill="#555"/><rect x="4" y="2.5" width="13" height="6" fill="#eee"/><rect x="12" y="3.5" width="3" height="4" fill="#555"/><rect x="4" y="11.5" width="13.5" height="7.5" fill="#eee"/><circle cx="17" cy="14.8" r="7" fill="#c8203a"/><path d="M14 10.5 V14.5 A3 3 0 0 0 17 17.5 H20 M17.5 15 L20.5 17.5 L17.5 20" fill="none" stroke="#fff" stroke-width="1.8"/></svg>
<svg class="abs" style="left:9px;top:177.6px" width="24" height="24" viewBox="0 0 24 24"><circle cx="12" cy="12" r="8.6" fill="none" stroke="#b8b8b8" stroke-width="6.8"/><path d="M12 3.4 A8.6 8.6 0 0 1 20.6 12" fill="none" stroke="#c8203a" stroke-width="6.8"/><path d="M12 20.6 A8.6 8.6 0 0 1 3.4 12" fill="none" stroke="#c8203a" stroke-width="6.8"/></svg>
<svg class="abs" style="left:9px;top:217px" width="24" height="26" viewBox="0 0 24 26"><path d="M3 1 H13 L18 6 V22 H3 Z" fill="#f4f4f4" stroke="#444" stroke-width="1.3"/><path d="M13 1 L18 6 H13 Z" fill="#444"/><circle cx="17" cy="17" r="7" fill="#c8203a"/><path d="M17 12.8 V20.5 M13.7 17.2 L17 20.6 L20.3 17.2"  fill="none" stroke="#fff" stroke-width="1.9"/></svg>
<svg class="abs" style="left:9px;top:247.5px" width="24" height="26" viewBox="0 0 24 26"><path d="M3 1 H13 L18 6 V22 H3 Z" fill="#f4f4f4" stroke="#444" stroke-width="1.3"/><path d="M13 1 L18 6 H13 Z" fill="#444"/><circle cx="17" cy="16.5" r="7" fill="#c8203a"/><path d="M17 20.7 V13 M13.7 16.3 L17 12.9 L20.3 16.3"  fill="none" stroke="#fff" stroke-width="1.9"/></svg>
<svg class="abs" style="left:9px;top:278px" width="24" height="22" viewBox="0 0 24 22"><path d="M1 1 H5 V8 L10 4 V9 L16 4 V9 L23 4 V21 H1 Z" fill="#444"/><rect x="4" y="14" width="4" height="3" fill="#fff"/><rect x="10" y="14" width="4" height="3" fill="#fff"/><rect x="16" y="14" width="4" height="3" fill="#fff"/></svg>
<svg class="abs" style="left:9px;top:316px" width="26" height="26" viewBox="0 0 26 26"><rect x="1" y="1" width="21.5" height="22" rx="3" fill="#217a1e"/><path d="M6 1 C6 7 11 8 11 21 M14 1 C14 5 19 6 22 8" stroke="#5fa85a" stroke-width="1.5" fill="none"/><circle cx="3.5" cy="13" r="1.6" fill="#f0a030"/><circle cx="20" cy="5" r="1.6" fill="#f0a030"/><circle cx="16.5" cy="15.6" r="5" fill="none" stroke="#c8203a" stroke-width="3.5" stroke-dasharray="2.2,1.7"/><circle cx="16.5" cy="15.6" r="3.4" fill="none" stroke="#c8203a" stroke-width="2"/></svg>
<svg class="abs" style="left:9px;top:354px" width="24" height="26" viewBox="0 0 24 26"><path d="M7 1 H15 L19 5 V19 H7 Z" fill="#f4f4f4" stroke="#555" stroke-width="1.1"/><path d="M15 1 L19 5 H15 Z" fill="#555"/><line x1="3" y1="1" x2="3" y2="19" stroke="#555" stroke-width="1"/><line x1="2" y1="1" x2="4" y2="1" stroke="#555"/><line x1="2" y1="19" x2="4" y2="19" stroke="#555"/><line x1="7" y1="22.5" x2="19" y2="22.5" stroke="#555" stroke-width="1"/><line x1="7" y1="21" x2="7" y2="24" stroke="#555"/><line x1="19" y1="21" x2="19" y2="24" stroke="#555"/></svg>
<svg class="abs" style="left:9px;top:385px" width="25" height="24" viewBox="0 0 25 24"><rect x="6" y="1" width="13" height="6" fill="#fff" stroke="#444" stroke-width="1.4"/><rect x="0.5" y="7" width="24" height="10" rx="2.5" fill="#444"/><path d="M5 12 H20 V22.5 H5 Z" fill="#f4f4f4" stroke="#444" stroke-width="1.4"/></svg>
<svg class="abs" style="left:9px;top:415px" width="25" height="24" viewBox="0 0 25 24"><rect x="7" y="1" width="11" height="5" fill="#fff" stroke="#444" stroke-width="1.3"/><rect x="0.5" y="6" width="24" height="6" rx="1.5" fill="#444"/><path d="M6.5 12 H18 V19 H6.5 Z" fill="#f4f4f4" stroke="#444" stroke-width="1.3"/><line x1="3" y1="12" x2="3" y2="21.5" stroke="#444" stroke-width="1.4"/><line x1="22" y1="12" x2="22" y2="21.5" stroke="#444" stroke-width="1.4"/><line x1="0.5" y1="21.5" x2="5.5" y2="21.5" stroke="#444" stroke-width="1.4"/><line x1="19.5" y1="21.5" x2="24.5" y2="21.5" stroke="#444" stroke-width="1.4"/></svg>
<svg class="abs" style="left:9px;top:454px" width="25" height="24" viewBox="0 0 25 24"><rect x="0.5" y="0.5" width="24" height="23" rx="4" fill="#c8203a"/><path d="M8 7.5 A6.8 6.8 0 1 0 17 7.5" fill="none" stroke="#fff" stroke-width="2.3"/><line x1="12.5" y1="4" x2="12.5" y2="11.5" stroke="#fff" stroke-width="2.3"/></svg>
<div class="t fit" style="left:148.1px;top:93.142px;width:32.1px;font-size:12px;color:#000;"><span>Ctrl+S</span></div>
<div class="t fit" style="left:147.4px;top:391.342px;width:32.4px;font-size:12px;color:#000;"><span>Ctrl+P</span></div>
<svg class="abs" style="left:184px;top:223.5px" width="7" height="11"><polyline points="1.5,1 5.5,5.5 1.5,10" fill="none" stroke="#333" stroke-width="1.2"/></svg>
<svg class="abs" style="left:184px;top:252.9px" width="7" height="11"><polyline points="1.5,1 5.5,5.5 1.5,10" fill="none" stroke="#333" stroke-width="1.2"/></svg>
<svg class="abs" style="left:184px;top:284.1px" width="7" height="11"><polyline points="1.5,1 5.5,5.5 1.5,10" fill="none" stroke="#333" stroke-width="1.2"/></svg>
<div class="menu" style="left:201px;top:241px;width:301px;height:314px"></div>
<div class="abs" style="left:206px;top:394px;width:290px;height:29px;background:#f0f0f0;border-radius:5px"></div>
<svg class="abs" style="left:232px;top:393px" width="56" height="23"><path d="M1 1.5 C15 1 35 1.5 54 1 L54 21 C35 21.5 15 21 1 22 Z" fill="#22dd0a"/></svg>
<div class="sep" style="left:209px;top:487.5px;width:285px"></div>
<svg class="abs" style="left:208px;top:246.3px" width="26" height="26" viewBox="0 0 26 26"><rect x="4" y="1" width="18" height="18" rx="2.5" fill="#bcbcbc"/><rect x="1" y="3" width="19" height="9" fill="#1f7fd0"/><text x="10.5" y="10.5" font-size="9" text-anchor="middle" fill="#fff" font-family="Liberation Sans">.dsn</text><circle cx="18" cy="18" r="7" fill="#c8203a"/><path d="M18 22.2 V14.5 M14.7 17.8 L18 14.4 L21.3 17.8"  fill="none" stroke="#fff" stroke-width="1.9"/></svg>
<svg class="abs" style="left:208px;top:276.3px" width="26" height="26" viewBox="0 0 26 26"><rect x="4" y="1" width="18" height="18" rx="2.5" fill="#bcbcbc"/><rect x="1" y="3" width="19" height="9" fill="#1f7fd0"/><text x="10.5" y="10.5" font-size="9" text-anchor="middle" fill="#fff" font-family="Liberation Sans">.gcd</text><circle cx="18" cy="18" r="7" fill="#c8203a"/><path d="M18 22.2 V14.5 M14.7 17.8 L18 14.4 L21.3 17.8"  fill="none" stroke="#fff" stroke-width="1.9"/></svg>
<svg class="abs" style="left:208px;top:336.3px" width="26" height="26" viewBox="0 0 26 26"><rect x="4" y="1" width="18" height="18" rx="2.5" fill="#bcbcbc"/><rect x="1" y="3" width="19" height="9" fill="#1f7fd0"/><text x="10.5" y="10.5" font-size="9" text-anchor="middle" fill="#fff" font-family="Liberation Sans">.idf</text><circle cx="18" cy="18" r="7" fill="#c8203a"/><path d="M18 22.2 V14.5 M14.7 17.8 L18 14.4 L21.3 17.8"  fill="none" stroke="#fff" stroke-width="1.9"/></svg>
<svg class="abs" style="left:208px;top:366.3px" width="26" height="26" viewBox="0 0 26 26"><rect x="4" y="1" width="18" height="18" rx="2.5" fill="#bcbcbc"/><rect x="1" y="3" width="19" height="9" fill="#1f7fd0"/><text x="10.5" y="10.5" font-size="9" text-anchor="middle" fill="#fff" font-family="Liberation Sans">.stp</text><circle cx="18" cy="18" r="7" fill="#c8203a"/><path d="M18 22.2 V14.5 M14.7 17.8 L18 14.4 L21.3 17.8"  fill="none" stroke="#fff" stroke-width="1.9"/></svg>
<svg class="abs" style="left:208px;top:396.5px" width="26" height="26" viewBox="0 0 26 26"><rect x="4" y="1" width="18" height="18" rx="2.5" fill="#bcbcbc"/><rect x="1" y="3" width="19" height="9" fill="#1f7fd0"/><text x="10.5" y="10.5" font-size="9" text-anchor="middle" fill="#fff" font-family="Liberation Sans">.svg</text><circle cx="18" cy="18" r="7" fill="#c8203a"/><path d="M18 22.2 V14.5 M14.7 17.8 L18 14.4 L21.3 17.8"  fill="none" stroke="#fff" stroke-width="1.9"/></svg>
<svg class="abs" style="left:208px;top:456.6px" width="26" height="26" viewBox="0 0 26 26"><rect x="4" y="1" width="18" height="18" rx="2.5" fill="#bcbcbc"/><rect x="1" y="3" width="19" height="9" fill="#1f7fd0"/><text x="10.5" y="10.5" font-size="9" text-anchor="middle" fill="#fff" font-family="Liberation Sans">.stp</text><circle cx="18" cy="18" r="7" fill="#c8203a"/><path d="M18 22.2 V14.5 M14.7 17.8 L18 14.4 L21.3 17.8"  fill="none" stroke="#fff" stroke-width="1.9"/></svg>
<svg class="abs" style="left:208px;top:306px" width="26" height="26" viewBox="0 0 26 26"><rect x="2" y="1" width="15" height="15" fill="#333"/><rect x="2" y="8" width="15" height="1.5" fill="#555"/><rect x="0.5" y="17" width="15" height="2.5" fill="#1f7fd0"/><rect x="5" y="19" width="1" height="5" fill="#aaa"/><rect x="12" y="19" width="1" height="5" fill="#aaa"/><circle cx="18" cy="18" r="7" fill="#c8203a"/><path d="M18 22.2 V14.5 M14.7 17.8 L18 14.4 L21.3 17.8"  fill="none" stroke="#fff" stroke-width="1.9"/></svg>
<svg class="abs" style="left:208px;top:426.8px" width="26" height="26" viewBox="0 0 26 26"><rect x="1" y="1" width="21" height="20" rx="2.5" fill="#bcbcbc"/><path d="M3 12 L6 7 L8 11 L10 5 L12 10 L14 6" fill="none" stroke="#c8203a" stroke-width="1.2"/><line x1="7" y1="16" x2="18" y2="5" stroke="#1f7fd0" stroke-width="2.2"/><circle cx="18" cy="18" r="7" fill="#c8203a"/><path d="M18 22.2 V14.5 M14.7 17.8 L18 14.4 L21.3 17.8"  fill="none" stroke="#fff" stroke-width="1.9"/></svg>
<svg class="abs" style="left:207px;top:495px" width="26" height="26" viewBox="0 0 26 26"><rect x="10" y="9" width="4" height="14" fill="#333"/><rect x="15" y="9" width="4" height="14" fill="#333"/><path d="M20 9 L23 8.5 L25 22 L22 22.5 Z" fill="#1f7fd0"/><path d="M1 14 C2 20 6 22 11 20" fill="none" stroke="#c8203a" stroke-width="3.2"/><polygon points="9,16 13,20.5 8.5,23.5" fill="#c8203a"/><line x1="6" y1="12" x2="14" y2="4" stroke="#1f7fd0" stroke-width="1.8"/><circle cx="15" cy="3" r="2" fill="none" stroke="#1f7fd0" stroke-width="1.2"/></svg>
<svg class="abs" style="left:207px;top:524.6px" width="26" height="26" viewBox="0 0 26 26"><rect x="10" y="9" width="4" height="14" fill="#333"/><rect x="15" y="9" width="4" height="14" fill="#333"/><path d="M20 9 L23 8.5 L25 22 L22 22.5 Z" fill="#1f7fd0"/><path d="M1 14 C2 20 6 22 11 20" fill="none" stroke="#c8203a" stroke-width="3.2"/><polygon points="9,16 13,20.5 8.5,23.5" fill="#c8203a"/><line x1="6" y1="12" x2="14" y2="4" stroke="#1f7fd0" stroke-width="1.8"/><circle cx="15" cy="3" r="2" fill="none" stroke="#1f7fd0" stroke-width="1.2"/><rect x="14" y="9" width="12" height="5" fill="#c8203a"/><rect x="16" y="10.5" width="8" height="1" fill="#fff"/></svg>
<div class="t fit" style="left:246.3px;top:252.942px;width:79.3px;font-size:12px;color:#000;"><span>Specctra DSN...</span></div>
<div class="t fit" style="left:246.3px;top:282.942px;width:52px;font-size:12px;color:#000;"><span>GenCAD...</span></div>
<div class="t fit" style="left:246.3px;top:312.942px;width:39.2px;font-size:12px;color:#000;"><span>VRML...</span></div>
<div class="t fit" style="left:246.3px;top:342.942px;width:37.2px;font-size:12px;color:#000;"><span>IDFv3...</span></div>
<div class="t fit" style="left:246.3px;top:372.942px;width:29.9px;font-size:12px;color:#000;"><span>STEP...</span></div>
<div class="t fit" style="left:246.3px;top:403.142px;width:29px;font-size:12px;color:#000;"><span>SVG...</span></div>
<div class="t fit" style="left:246.3px;top:433.442px;width:185px;font-size:12px;color:#000;"><span>フットプリント関連付け (.cmp) ファイル...</span></div>
<div class="t fit" style="left:246.3px;top:463.242px;width:61.8px;font-size:12px;color:#000;"><span>Hyperlynx...</span></div>
<div class="t fit" style="left:246.3px;top:502.642px;width:179px;font-size:12px;color:#000;"><span>フットプリントをライブラリにエクスポート...</span></div>
<div class="t fit" style="left:246.3px;top:532.242px;width:209.2px;font-size:12px;color:#000;"><span>フットプリントを新しいライブラリにエクスポート...</span></div><script>document.querySelectorAll(".fit").forEach(function(d){var s=d.firstElementChild;var w=parseFloat(d.style.width);var a=s.getBoundingClientRect().width;if(a>0){s.style.display="inline-block";s.style.transformOrigin="0 50%";s.style.transform="scaleX("+(w/a)+")";}});</script></body></html>
